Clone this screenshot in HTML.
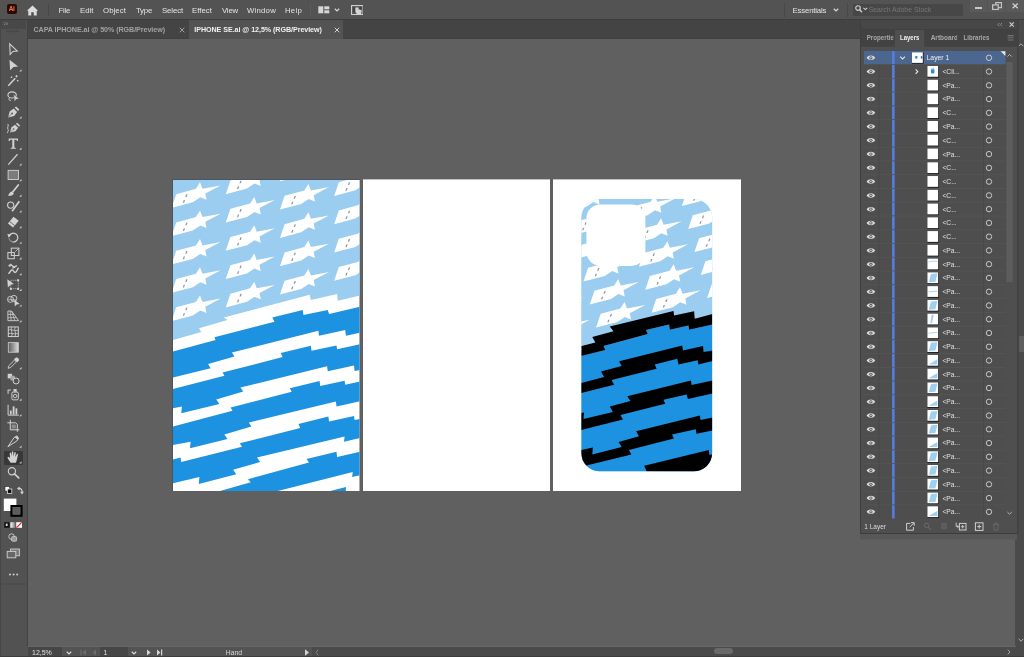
<!DOCTYPE html>
<html><head><meta charset="utf-8">
<style>
*{box-sizing:border-box;margin:0;padding:0}
html,body{width:1024px;height:657px;overflow:hidden;background:#606060;font-family:"Liberation Sans",sans-serif;}
body{position:relative}
.abs{position:absolute}
#appbar{left:0;top:0;width:1024px;height:20px;background:#535353;border-bottom:1px solid #3d3d3d}
#tabbar{left:27px;top:20px;width:989px;height:19px;background:#444444;border-bottom:1px solid #3f3f3f}
#toolbar{left:0;top:20px;width:27.6px;height:636px;background:#525252;border-right:1.6px solid #424242}
#tbhead{left:0;top:20px;width:26px;height:9px;background:#484848}
#canvas{left:27px;top:39px;width:989px;height:607px;background:#606060}
#status{left:27px;top:646px;width:285px;height:10px;background:#535353}
#hscroll{left:312px;top:646px;width:703px;height:10px;background:#4a4a4a}
#gutter{left:1015px;top:20px;width:9px;height:637px;background:#4a4a4a}
#bottomline{left:0;top:656px;width:1024px;height:1px;background:#3c3c3c}
.art{position:absolute;left:0;top:0}
.menu{position:absolute;top:5.5px;font-size:7.8px;color:#e4e4e4;line-height:10px;white-space:nowrap}
.t{position:absolute;white-space:nowrap}
</style></head><body>
<div id="wrap" style="position:absolute;left:0;top:0;width:1024px;height:657px;will-change:transform">
<div class="abs" id="canvas"></div>
<svg class="art" width="1024" height="657" viewBox="0 0 1024 657">
<rect x="172" y="179" width="187.5" height="312" fill="#4b5560"/>
<rect x="173" y="180" width="186.5" height="311" fill="#fff"/>
<rect x="363" y="179.4" width="187" height="311.6" fill="#fff"/>
<rect x="553" y="179.4" width="188" height="311.6" fill="#fff"/>
<clipPath id="c1"><polygon points="173.00,180.00 360.00,180.00 360.00,295.50 337.75,300.75 337.10,293.90 310.90,300.10 309.60,294.75 223.75,317.60 227.50,320.10 199.00,328.25 201.25,332.00 173.00,340.10"/></clipPath><clipPath id="ca"><rect x="173" y="180" width="186.5" height="311"/></clipPath><g clip-path="url(#ca)"><polygon fill="#9acdef" points="173.00,180.00 360.00,180.00 360.00,295.50 337.75,300.75 337.10,293.90 310.90,300.10 309.60,294.75 223.75,317.60 227.50,320.10 199.00,328.25 201.25,332.00 173.00,340.10"/>
<g clip-path="url(#ca)"><polygon fill="#fff" points="117.35,164.20 122.00,150.45 141.70,145.10 145.80,138.60 148.30,145.10 166.40,141.70 151.10,149.80 152.35,156.10 146.10,153.60 138.60,158.60"/><polygon fill="#fff" points="117.35,192.50 122.00,178.75 141.70,173.40 145.80,166.90 148.30,173.40 166.40,170.00 151.10,178.10 152.35,184.40 146.10,181.90 138.60,186.90"/><polygon fill="#fff" points="117.35,220.80 122.00,207.05 141.70,201.70 145.80,195.20 148.30,201.70 166.40,198.30 151.10,206.40 152.35,212.70 146.10,210.20 138.60,215.20"/><polygon fill="#fff" points="117.35,249.10 122.00,235.35 141.70,230.00 145.80,223.50 148.30,230.00 166.40,226.60 151.10,234.70 152.35,241.00 146.10,238.50 138.60,243.50"/><polygon fill="#fff" points="117.35,277.40 122.00,263.65 141.70,258.30 145.80,251.80 148.30,258.30 166.40,254.90 151.10,263.00 152.35,269.30 146.10,266.80 138.60,271.80"/><polygon fill="#fff" points="117.35,305.70 122.00,291.95 141.70,286.60 145.80,280.10 148.30,286.60 166.40,283.20 151.10,291.30 152.35,297.60 146.10,295.10 138.60,300.10"/><polygon fill="#fff" points="171.55,151.30 176.20,137.55 195.90,132.20 200.00,125.70 202.50,132.20 220.60,128.80 205.30,136.90 206.55,143.20 200.30,140.70 192.80,145.70"/><polygon fill="#fff" points="171.55,179.60 176.20,165.85 195.90,160.50 200.00,154.00 202.50,160.50 220.60,157.10 205.30,165.20 206.55,171.50 200.30,169.00 192.80,174.00"/><polygon fill="#fff" points="171.55,207.90 176.20,194.15 195.90,188.80 200.00,182.30 202.50,188.80 220.60,185.40 205.30,193.50 206.55,199.80 200.30,197.30 192.80,202.30"/><polygon fill="#fff" points="171.55,236.20 176.20,222.45 195.90,217.10 200.00,210.60 202.50,217.10 220.60,213.70 205.30,221.80 206.55,228.10 200.30,225.60 192.80,230.60"/><polygon fill="#fff" points="171.55,264.50 176.20,250.75 195.90,245.40 200.00,238.90 202.50,245.40 220.60,242.00 205.30,250.10 206.55,256.40 200.30,253.90 192.80,258.90"/><polygon fill="#fff" points="171.55,292.80 176.20,279.05 195.90,273.70 200.00,267.20 202.50,273.70 220.60,270.30 205.30,278.40 206.55,284.70 200.30,282.20 192.80,287.20"/><polygon fill="#fff" points="171.55,321.10 176.20,307.35 195.90,302.00 200.00,295.50 202.50,302.00 220.60,298.60 205.30,306.70 206.55,313.00 200.30,310.50 192.80,315.50"/><polygon fill="#fff" points="225.75,165.90 230.40,152.15 250.10,146.80 254.20,140.30 256.70,146.80 274.80,143.40 259.50,151.50 260.75,157.80 254.50,155.30 247.00,160.30"/><polygon fill="#fff" points="225.75,194.20 230.40,180.45 250.10,175.10 254.20,168.60 256.70,175.10 274.80,171.70 259.50,179.80 260.75,186.10 254.50,183.60 247.00,188.60"/><polygon fill="#fff" points="225.75,222.50 230.40,208.75 250.10,203.40 254.20,196.90 256.70,203.40 274.80,200.00 259.50,208.10 260.75,214.40 254.50,211.90 247.00,216.90"/><polygon fill="#fff" points="225.75,250.80 230.40,237.05 250.10,231.70 254.20,225.20 256.70,231.70 274.80,228.30 259.50,236.40 260.75,242.70 254.50,240.20 247.00,245.20"/><polygon fill="#fff" points="225.75,279.10 230.40,265.35 250.10,260.00 254.20,253.50 256.70,260.00 274.80,256.60 259.50,264.70 260.75,271.00 254.50,268.50 247.00,273.50"/><polygon fill="#fff" points="225.75,307.40 230.40,293.65 250.10,288.30 254.20,281.80 256.70,288.30 274.80,284.90 259.50,293.00 260.75,299.30 254.50,296.80 247.00,301.80"/><polygon fill="#fff" points="279.95,153.00 284.60,139.25 304.30,133.90 308.40,127.40 310.90,133.90 329.00,130.50 313.70,138.60 314.95,144.90 308.70,142.40 301.20,147.40"/><polygon fill="#fff" points="279.95,181.30 284.60,167.55 304.30,162.20 308.40,155.70 310.90,162.20 329.00,158.80 313.70,166.90 314.95,173.20 308.70,170.70 301.20,175.70"/><polygon fill="#fff" points="279.95,209.60 284.60,195.85 304.30,190.50 308.40,184.00 310.90,190.50 329.00,187.10 313.70,195.20 314.95,201.50 308.70,199.00 301.20,204.00"/><polygon fill="#fff" points="279.95,237.90 284.60,224.15 304.30,218.80 308.40,212.30 310.90,218.80 329.00,215.40 313.70,223.50 314.95,229.80 308.70,227.30 301.20,232.30"/><polygon fill="#fff" points="279.95,266.20 284.60,252.45 304.30,247.10 308.40,240.60 310.90,247.10 329.00,243.70 313.70,251.80 314.95,258.10 308.70,255.60 301.20,260.60"/><polygon fill="#fff" points="279.95,294.50 284.60,280.75 304.30,275.40 308.40,268.90 310.90,275.40 329.00,272.00 313.70,280.10 314.95,286.40 308.70,283.90 301.20,288.90"/><polygon fill="#fff" points="279.95,322.80 284.60,309.05 304.30,303.70 308.40,297.20 310.90,303.70 329.00,300.30 313.70,308.40 314.95,314.70 308.70,312.20 301.20,317.20"/><polygon fill="#fff" points="334.15,167.60 338.80,153.85 358.50,148.50 362.60,142.00 365.10,148.50 383.20,145.10 367.90,153.20 369.15,159.50 362.90,157.00 355.40,162.00"/><polygon fill="#fff" points="334.15,195.90 338.80,182.15 358.50,176.80 362.60,170.30 365.10,176.80 383.20,173.40 367.90,181.50 369.15,187.80 362.90,185.30 355.40,190.30"/><polygon fill="#fff" points="334.15,224.20 338.80,210.45 358.50,205.10 362.60,198.60 365.10,205.10 383.20,201.70 367.90,209.80 369.15,216.10 362.90,213.60 355.40,218.60"/><polygon fill="#fff" points="334.15,252.50 338.80,238.75 358.50,233.40 362.60,226.90 365.10,233.40 383.20,230.00 367.90,238.10 369.15,244.40 362.90,241.90 355.40,246.90"/><polygon fill="#fff" points="334.15,280.80 338.80,267.05 358.50,261.70 362.60,255.20 365.10,261.70 383.20,258.30 367.90,266.40 369.15,272.70 362.90,270.20 355.40,275.20"/></g>
<g clip-path="url(#c1)"><polygon fill="#9093a6" points="131.10,153.35 132.00,150.65 133.30,150.65 132.40,153.35"/><polygon fill="#9093a6" points="128.60,158.95 129.50,156.25 130.80,156.25 129.90,158.95"/><polygon fill="#9093a6" points="131.10,181.65 132.00,178.95 133.30,178.95 132.40,181.65"/><polygon fill="#9093a6" points="128.60,187.25 129.50,184.55 130.80,184.55 129.90,187.25"/><polygon fill="#9093a6" points="131.10,209.95 132.00,207.25 133.30,207.25 132.40,209.95"/><polygon fill="#9093a6" points="128.60,215.55 129.50,212.85 130.80,212.85 129.90,215.55"/><polygon fill="#9093a6" points="131.10,238.25 132.00,235.55 133.30,235.55 132.40,238.25"/><polygon fill="#9093a6" points="128.60,243.85 129.50,241.15 130.80,241.15 129.90,243.85"/><polygon fill="#9093a6" points="131.10,266.55 132.00,263.85 133.30,263.85 132.40,266.55"/><polygon fill="#9093a6" points="128.60,272.15 129.50,269.45 130.80,269.45 129.90,272.15"/><polygon fill="#9093a6" points="131.10,294.85 132.00,292.15 133.30,292.15 132.40,294.85"/><polygon fill="#9093a6" points="128.60,300.45 129.50,297.75 130.80,297.75 129.90,300.45"/><polygon fill="#9093a6" points="185.30,140.45 186.20,137.75 187.50,137.75 186.60,140.45"/><polygon fill="#9093a6" points="182.80,146.05 183.70,143.35 185.00,143.35 184.10,146.05"/><polygon fill="#9093a6" points="185.30,168.75 186.20,166.05 187.50,166.05 186.60,168.75"/><polygon fill="#9093a6" points="182.80,174.35 183.70,171.65 185.00,171.65 184.10,174.35"/><polygon fill="#9093a6" points="185.30,197.05 186.20,194.35 187.50,194.35 186.60,197.05"/><polygon fill="#9093a6" points="182.80,202.65 183.70,199.95 185.00,199.95 184.10,202.65"/><polygon fill="#9093a6" points="185.30,225.35 186.20,222.65 187.50,222.65 186.60,225.35"/><polygon fill="#9093a6" points="182.80,230.95 183.70,228.25 185.00,228.25 184.10,230.95"/><polygon fill="#9093a6" points="185.30,253.65 186.20,250.95 187.50,250.95 186.60,253.65"/><polygon fill="#9093a6" points="182.80,259.25 183.70,256.55 185.00,256.55 184.10,259.25"/><polygon fill="#9093a6" points="185.30,281.95 186.20,279.25 187.50,279.25 186.60,281.95"/><polygon fill="#9093a6" points="182.80,287.55 183.70,284.85 185.00,284.85 184.10,287.55"/><polygon fill="#9093a6" points="185.30,310.25 186.20,307.55 187.50,307.55 186.60,310.25"/><polygon fill="#9093a6" points="182.80,315.85 183.70,313.15 185.00,313.15 184.10,315.85"/><polygon fill="#9093a6" points="239.50,155.05 240.40,152.35 241.70,152.35 240.80,155.05"/><polygon fill="#9093a6" points="237.00,160.65 237.90,157.95 239.20,157.95 238.30,160.65"/><polygon fill="#9093a6" points="239.50,183.35 240.40,180.65 241.70,180.65 240.80,183.35"/><polygon fill="#9093a6" points="237.00,188.95 237.90,186.25 239.20,186.25 238.30,188.95"/><polygon fill="#9093a6" points="239.50,211.65 240.40,208.95 241.70,208.95 240.80,211.65"/><polygon fill="#9093a6" points="237.00,217.25 237.90,214.55 239.20,214.55 238.30,217.25"/><polygon fill="#9093a6" points="239.50,239.95 240.40,237.25 241.70,237.25 240.80,239.95"/><polygon fill="#9093a6" points="237.00,245.55 237.90,242.85 239.20,242.85 238.30,245.55"/><polygon fill="#9093a6" points="239.50,268.25 240.40,265.55 241.70,265.55 240.80,268.25"/><polygon fill="#9093a6" points="237.00,273.85 237.90,271.15 239.20,271.15 238.30,273.85"/><polygon fill="#9093a6" points="239.50,296.55 240.40,293.85 241.70,293.85 240.80,296.55"/><polygon fill="#9093a6" points="237.00,302.15 237.90,299.45 239.20,299.45 238.30,302.15"/><polygon fill="#9093a6" points="293.70,142.15 294.60,139.45 295.90,139.45 295.00,142.15"/><polygon fill="#9093a6" points="291.20,147.75 292.10,145.05 293.40,145.05 292.50,147.75"/><polygon fill="#9093a6" points="293.70,170.45 294.60,167.75 295.90,167.75 295.00,170.45"/><polygon fill="#9093a6" points="291.20,176.05 292.10,173.35 293.40,173.35 292.50,176.05"/><polygon fill="#9093a6" points="293.70,198.75 294.60,196.05 295.90,196.05 295.00,198.75"/><polygon fill="#9093a6" points="291.20,204.35 292.10,201.65 293.40,201.65 292.50,204.35"/><polygon fill="#9093a6" points="293.70,227.05 294.60,224.35 295.90,224.35 295.00,227.05"/><polygon fill="#9093a6" points="291.20,232.65 292.10,229.95 293.40,229.95 292.50,232.65"/><polygon fill="#9093a6" points="293.70,255.35 294.60,252.65 295.90,252.65 295.00,255.35"/><polygon fill="#9093a6" points="291.20,260.95 292.10,258.25 293.40,258.25 292.50,260.95"/><polygon fill="#9093a6" points="293.70,283.65 294.60,280.95 295.90,280.95 295.00,283.65"/><polygon fill="#9093a6" points="291.20,289.25 292.10,286.55 293.40,286.55 292.50,289.25"/><polygon fill="#9093a6" points="293.70,311.95 294.60,309.25 295.90,309.25 295.00,311.95"/><polygon fill="#9093a6" points="291.20,317.55 292.10,314.85 293.40,314.85 292.50,317.55"/><polygon fill="#9093a6" points="347.90,156.75 348.80,154.05 350.10,154.05 349.20,156.75"/><polygon fill="#9093a6" points="345.40,162.35 346.30,159.65 347.60,159.65 346.70,162.35"/><polygon fill="#9093a6" points="347.90,185.05 348.80,182.35 350.10,182.35 349.20,185.05"/><polygon fill="#9093a6" points="345.40,190.65 346.30,187.95 347.60,187.95 346.70,190.65"/><polygon fill="#9093a6" points="347.90,213.35 348.80,210.65 350.10,210.65 349.20,213.35"/><polygon fill="#9093a6" points="345.40,218.95 346.30,216.25 347.60,216.25 346.70,218.95"/><polygon fill="#9093a6" points="347.90,241.65 348.80,238.95 350.10,238.95 349.20,241.65"/><polygon fill="#9093a6" points="345.40,247.25 346.30,244.55 347.60,244.55 346.70,247.25"/><polygon fill="#9093a6" points="347.90,269.95 348.80,267.25 350.10,267.25 349.20,269.95"/><polygon fill="#9093a6" points="345.40,275.55 346.30,272.85 347.60,272.85 346.70,275.55"/></g>
<polygon fill="#1d92e1" points="173.00,351.40 215.60,340.10 214.40,337.25 274.50,321.70 272.30,317.60 302.75,310.10 303.40,315.10 327.75,310.10 329.00,313.90 360.00,306.80 360.00,332.80 345.90,335.75 345.25,330.10 319.00,335.75 318.40,330.75 231.90,352.60 234.40,356.40 208.10,363.90 210.60,368.25 173.00,377.60"/>
<polygon fill="#1d92e1" points="173.00,388.90 224.40,375.75 222.50,372.60 282.60,357.00 280.75,353.00 310.90,345.75 311.50,350.75 336.50,345.50 337.10,349.25 360.00,344.30 360.00,370.00 354.60,371.00 354.00,365.40 327.75,371.20 327.10,366.20 240.40,387.60 243.25,391.40 216.25,399.50 219.40,403.90 181.25,413.25 181.90,406.40 173.00,408.25"/>
<polygon fill="#1d92e1" points="173.00,426.40 232.50,410.75 230.60,407.60 291.70,391.70 289.80,388.25 319.60,381.00 320.25,386.00 344.60,380.75 345.25,384.75 360.00,381.50 360.00,401.20 336.50,406.40 335.90,401.40 248.80,422.60 251.40,426.60 224.40,434.50 227.50,438.90 190.00,448.25 190.60,441.75 173.00,445.10"/>
<polygon fill="#1d92e1" points="173.00,459.50 180.60,457.60 181.25,462.00 242.00,446.80 239.80,443.25 300.25,428.00 298.40,423.90 328.40,416.40 329.00,421.40 354.00,415.90 354.60,420.10 360.00,419.00 360.00,438.00 344.00,441.75 344.60,436.40 257.00,457.60 260.10,462.00 233.10,469.75 236.25,474.25 198.75,483.90 199.40,477.00 173.00,483.25"/>
<polygon fill="#1d92e1" points="220.00,491.00 250.75,482.30 248.00,479.20 309.00,462.60 306.50,458.90 336.50,451.75 337.10,457.00 360.00,451.80 360.00,475.30 360.00,475.30 352.10,477.00 352.75,472.00 277.75,491.00"/>
<polygon fill="#1d92e1" points="330.25,491.00 345.90,487.00 345.90,491.00"/></g>
<clipPath id="cp"><rect x="581.3" y="199" width="130.9" height="272.3" rx="18.5" ry="18.5"/></clipPath>
<g clip-path="url(#cp)">
<rect x="580" y="198" width="134" height="275" fill="#9acdef"/>
<polygon fill="#fff" points="440.95,196.10 445.60,182.35 465.30,177.00 469.40,170.50 471.90,177.00 490.00,173.60 474.70,181.70 475.95,188.00 469.70,185.50 462.20,190.50"/><polygon fill="#9093a6" points="454.70,185.25 455.60,182.55 456.90,182.55 456.00,185.25"/><polygon fill="#9093a6" points="452.20,190.85 453.10,188.15 454.40,188.15 453.50,190.85"/><polygon fill="#fff" points="447.25,219.10 451.90,205.35 471.60,200.00 475.70,193.50 478.20,200.00 496.30,196.60 481.00,204.70 482.25,211.00 476.00,208.50 468.50,213.50"/><polygon fill="#9093a6" points="461.00,208.25 461.90,205.55 463.20,205.55 462.30,208.25"/><polygon fill="#9093a6" points="458.50,213.85 459.40,211.15 460.70,211.15 459.80,213.85"/><polygon fill="#fff" points="453.55,242.10 458.20,228.35 477.90,223.00 482.00,216.50 484.50,223.00 502.60,219.60 487.30,227.70 488.55,234.00 482.30,231.50 474.80,236.50"/><polygon fill="#9093a6" points="467.30,231.25 468.20,228.55 469.50,228.55 468.60,231.25"/><polygon fill="#9093a6" points="464.80,236.85 465.70,234.15 467.00,234.15 466.10,236.85"/><polygon fill="#fff" points="459.85,265.10 464.50,251.35 484.20,246.00 488.30,239.50 490.80,246.00 508.90,242.60 493.60,250.70 494.85,257.00 488.60,254.50 481.10,259.50"/><polygon fill="#9093a6" points="473.60,254.25 474.50,251.55 475.80,251.55 474.90,254.25"/><polygon fill="#9093a6" points="471.10,259.85 472.00,257.15 473.30,257.15 472.40,259.85"/><polygon fill="#fff" points="466.15,288.10 470.80,274.35 490.50,269.00 494.60,262.50 497.10,269.00 515.20,265.60 499.90,273.70 501.15,280.00 494.90,277.50 487.40,282.50"/><polygon fill="#9093a6" points="479.90,277.25 480.80,274.55 482.10,274.55 481.20,277.25"/><polygon fill="#9093a6" points="477.40,282.85 478.30,280.15 479.60,280.15 478.70,282.85"/><polygon fill="#fff" points="472.45,311.10 477.10,297.35 496.80,292.00 500.90,285.50 503.40,292.00 521.50,288.60 506.20,296.70 507.45,303.00 501.20,300.50 493.70,305.50"/><polygon fill="#9093a6" points="486.20,300.25 487.10,297.55 488.40,297.55 487.50,300.25"/><polygon fill="#9093a6" points="483.70,305.85 484.60,303.15 485.90,303.15 485.00,305.85"/><polygon fill="#fff" points="478.75,334.10 483.40,320.35 503.10,315.00 507.20,308.50 509.70,315.00 527.80,311.60 512.50,319.70 513.75,326.00 507.50,323.50 500.00,328.50"/><polygon fill="#9093a6" points="492.50,323.25 493.40,320.55 494.70,320.55 493.80,323.25"/><polygon fill="#9093a6" points="490.00,328.85 490.90,326.15 492.20,326.15 491.30,328.85"/><polygon fill="#fff" points="485.05,357.10 489.70,343.35 509.40,338.00 513.50,331.50 516.00,338.00 534.10,334.60 518.80,342.70 520.05,349.00 513.80,346.50 506.30,351.50"/><polygon fill="#9093a6" points="498.80,346.25 499.70,343.55 501.00,343.55 500.10,346.25"/><polygon fill="#9093a6" points="496.30,351.85 497.20,349.15 498.50,349.15 497.60,351.85"/><polygon fill="#fff" points="491.35,380.10 496.00,366.35 515.70,361.00 519.80,354.50 522.30,361.00 540.40,357.60 525.10,365.70 526.35,372.00 520.10,369.50 512.60,374.50"/><polygon fill="#9093a6" points="505.10,369.25 506.00,366.55 507.30,366.55 506.40,369.25"/><polygon fill="#9093a6" points="502.60,374.85 503.50,372.15 504.80,372.15 503.90,374.85"/><polygon fill="#fff" points="497.65,403.10 502.30,389.35 522.00,384.00 526.10,377.50 528.60,384.00 546.70,380.60 531.40,388.70 532.65,395.00 526.40,392.50 518.90,397.50"/><polygon fill="#9093a6" points="511.40,392.25 512.30,389.55 513.60,389.55 512.70,392.25"/><polygon fill="#9093a6" points="508.90,397.85 509.80,395.15 511.10,395.15 510.20,397.85"/><polygon fill="#fff" points="503.95,426.10 508.60,412.35 528.30,407.00 532.40,400.50 534.90,407.00 553.00,403.60 537.70,411.70 538.95,418.00 532.70,415.50 525.20,420.50"/><polygon fill="#9093a6" points="517.70,415.25 518.60,412.55 519.90,412.55 519.00,415.25"/><polygon fill="#9093a6" points="515.20,420.85 516.10,418.15 517.40,418.15 516.50,420.85"/><polygon fill="#fff" points="510.25,449.10 514.90,435.35 534.60,430.00 538.70,423.50 541.20,430.00 559.30,426.60 544.00,434.70 545.25,441.00 539.00,438.50 531.50,443.50"/><polygon fill="#9093a6" points="524.00,438.25 524.90,435.55 526.20,435.55 525.30,438.25"/><polygon fill="#9093a6" points="521.50,443.85 522.40,441.15 523.70,441.15 522.80,443.85"/><polygon fill="#fff" points="496.45,181.35 501.10,167.60 520.80,162.25 524.90,155.75 527.40,162.25 545.50,158.85 530.20,166.95 531.45,173.25 525.20,170.75 517.70,175.75"/><polygon fill="#9093a6" points="510.20,170.50 511.10,167.80 512.40,167.80 511.50,170.50"/><polygon fill="#9093a6" points="507.70,176.10 508.60,173.40 509.90,173.40 509.00,176.10"/><polygon fill="#fff" points="502.75,204.35 507.40,190.60 527.10,185.25 531.20,178.75 533.70,185.25 551.80,181.85 536.50,189.95 537.75,196.25 531.50,193.75 524.00,198.75"/><polygon fill="#9093a6" points="516.50,193.50 517.40,190.80 518.70,190.80 517.80,193.50"/><polygon fill="#9093a6" points="514.00,199.10 514.90,196.40 516.20,196.40 515.30,199.10"/><polygon fill="#fff" points="509.05,227.35 513.70,213.60 533.40,208.25 537.50,201.75 540.00,208.25 558.10,204.85 542.80,212.95 544.05,219.25 537.80,216.75 530.30,221.75"/><polygon fill="#9093a6" points="522.80,216.50 523.70,213.80 525.00,213.80 524.10,216.50"/><polygon fill="#9093a6" points="520.30,222.10 521.20,219.40 522.50,219.40 521.60,222.10"/><polygon fill="#fff" points="515.35,250.35 520.00,236.60 539.70,231.25 543.80,224.75 546.30,231.25 564.40,227.85 549.10,235.95 550.35,242.25 544.10,239.75 536.60,244.75"/><polygon fill="#9093a6" points="529.10,239.50 530.00,236.80 531.30,236.80 530.40,239.50"/><polygon fill="#9093a6" points="526.60,245.10 527.50,242.40 528.80,242.40 527.90,245.10"/><polygon fill="#fff" points="521.65,273.35 526.30,259.60 546.00,254.25 550.10,247.75 552.60,254.25 570.70,250.85 555.40,258.95 556.65,265.25 550.40,262.75 542.90,267.75"/><polygon fill="#9093a6" points="535.40,262.50 536.30,259.80 537.60,259.80 536.70,262.50"/><polygon fill="#9093a6" points="532.90,268.10 533.80,265.40 535.10,265.40 534.20,268.10"/><polygon fill="#fff" points="527.95,296.35 532.60,282.60 552.30,277.25 556.40,270.75 558.90,277.25 577.00,273.85 561.70,281.95 562.95,288.25 556.70,285.75 549.20,290.75"/><polygon fill="#9093a6" points="541.70,285.50 542.60,282.80 543.90,282.80 543.00,285.50"/><polygon fill="#9093a6" points="539.20,291.10 540.10,288.40 541.40,288.40 540.50,291.10"/><polygon fill="#fff" points="534.25,319.35 538.90,305.60 558.60,300.25 562.70,293.75 565.20,300.25 583.30,296.85 568.00,304.95 569.25,311.25 563.00,308.75 555.50,313.75"/><polygon fill="#9093a6" points="548.00,308.50 548.90,305.80 550.20,305.80 549.30,308.50"/><polygon fill="#9093a6" points="545.50,314.10 546.40,311.40 547.70,311.40 546.80,314.10"/><polygon fill="#fff" points="540.55,342.35 545.20,328.60 564.90,323.25 569.00,316.75 571.50,323.25 589.60,319.85 574.30,327.95 575.55,334.25 569.30,331.75 561.80,336.75"/><polygon fill="#9093a6" points="554.30,331.50 555.20,328.80 556.50,328.80 555.60,331.50"/><polygon fill="#9093a6" points="551.80,337.10 552.70,334.40 554.00,334.40 553.10,337.10"/><polygon fill="#fff" points="546.85,365.35 551.50,351.60 571.20,346.25 575.30,339.75 577.80,346.25 595.90,342.85 580.60,350.95 581.85,357.25 575.60,354.75 568.10,359.75"/><polygon fill="#9093a6" points="560.60,354.50 561.50,351.80 562.80,351.80 561.90,354.50"/><polygon fill="#9093a6" points="558.10,360.10 559.00,357.40 560.30,357.40 559.40,360.10"/><polygon fill="#fff" points="551.95,166.60 556.60,152.85 576.30,147.50 580.40,141.00 582.90,147.50 601.00,144.10 585.70,152.20 586.95,158.50 580.70,156.00 573.20,161.00"/><polygon fill="#9093a6" points="565.70,155.75 566.60,153.05 567.90,153.05 567.00,155.75"/><polygon fill="#9093a6" points="563.20,161.35 564.10,158.65 565.40,158.65 564.50,161.35"/><polygon fill="#fff" points="558.25,189.60 562.90,175.85 582.60,170.50 586.70,164.00 589.20,170.50 607.30,167.10 592.00,175.20 593.25,181.50 587.00,179.00 579.50,184.00"/><polygon fill="#9093a6" points="572.00,178.75 572.90,176.05 574.20,176.05 573.30,178.75"/><polygon fill="#9093a6" points="569.50,184.35 570.40,181.65 571.70,181.65 570.80,184.35"/><polygon fill="#fff" points="564.55,212.60 569.20,198.85 588.90,193.50 593.00,187.00 595.50,193.50 613.60,190.10 598.30,198.20 599.55,204.50 593.30,202.00 585.80,207.00"/><polygon fill="#9093a6" points="578.30,201.75 579.20,199.05 580.50,199.05 579.60,201.75"/><polygon fill="#9093a6" points="575.80,207.35 576.70,204.65 578.00,204.65 577.10,207.35"/><polygon fill="#fff" points="570.85,235.60 575.50,221.85 595.20,216.50 599.30,210.00 601.80,216.50 619.90,213.10 604.60,221.20 605.85,227.50 599.60,225.00 592.10,230.00"/><polygon fill="#9093a6" points="584.60,224.75 585.50,222.05 586.80,222.05 585.90,224.75"/><polygon fill="#9093a6" points="582.10,230.35 583.00,227.65 584.30,227.65 583.40,230.35"/><polygon fill="#fff" points="577.15,258.60 581.80,244.85 601.50,239.50 605.60,233.00 608.10,239.50 626.20,236.10 610.90,244.20 612.15,250.50 605.90,248.00 598.40,253.00"/><polygon fill="#9093a6" points="590.90,247.75 591.80,245.05 593.10,245.05 592.20,247.75"/><polygon fill="#9093a6" points="588.40,253.35 589.30,250.65 590.60,250.65 589.70,253.35"/><polygon fill="#fff" points="583.45,281.60 588.10,267.85 607.80,262.50 611.90,256.00 614.40,262.50 632.50,259.10 617.20,267.20 618.45,273.50 612.20,271.00 604.70,276.00"/><polygon fill="#9093a6" points="597.20,270.75 598.10,268.05 599.40,268.05 598.50,270.75"/><polygon fill="#9093a6" points="594.70,276.35 595.60,273.65 596.90,273.65 596.00,276.35"/><polygon fill="#fff" points="589.75,304.60 594.40,290.85 614.10,285.50 618.20,279.00 620.70,285.50 638.80,282.10 623.50,290.20 624.75,296.50 618.50,294.00 611.00,299.00"/><polygon fill="#9093a6" points="603.50,293.75 604.40,291.05 605.70,291.05 604.80,293.75"/><polygon fill="#9093a6" points="601.00,299.35 601.90,296.65 603.20,296.65 602.30,299.35"/><polygon fill="#fff" points="596.05,327.60 600.70,313.85 620.40,308.50 624.50,302.00 627.00,308.50 645.10,305.10 629.80,313.20 631.05,319.50 624.80,317.00 617.30,322.00"/><polygon fill="#9093a6" points="609.80,316.75 610.70,314.05 612.00,314.05 611.10,316.75"/><polygon fill="#9093a6" points="607.30,322.35 608.20,319.65 609.50,319.65 608.60,322.35"/><polygon fill="#fff" points="607.45,151.85 612.10,138.10 631.80,132.75 635.90,126.25 638.40,132.75 656.50,129.35 641.20,137.45 642.45,143.75 636.20,141.25 628.70,146.25"/><polygon fill="#9093a6" points="621.20,141.00 622.10,138.30 623.40,138.30 622.50,141.00"/><polygon fill="#9093a6" points="618.70,146.60 619.60,143.90 620.90,143.90 620.00,146.60"/><polygon fill="#fff" points="613.75,174.85 618.40,161.10 638.10,155.75 642.20,149.25 644.70,155.75 662.80,152.35 647.50,160.45 648.75,166.75 642.50,164.25 635.00,169.25"/><polygon fill="#9093a6" points="627.50,164.00 628.40,161.30 629.70,161.30 628.80,164.00"/><polygon fill="#9093a6" points="625.00,169.60 625.90,166.90 627.20,166.90 626.30,169.60"/><polygon fill="#fff" points="620.05,197.85 624.70,184.10 644.40,178.75 648.50,172.25 651.00,178.75 669.10,175.35 653.80,183.45 655.05,189.75 648.80,187.25 641.30,192.25"/><polygon fill="#9093a6" points="633.80,187.00 634.70,184.30 636.00,184.30 635.10,187.00"/><polygon fill="#9093a6" points="631.30,192.60 632.20,189.90 633.50,189.90 632.60,192.60"/><polygon fill="#fff" points="626.35,220.85 631.00,207.10 650.70,201.75 654.80,195.25 657.30,201.75 675.40,198.35 660.10,206.45 661.35,212.75 655.10,210.25 647.60,215.25"/><polygon fill="#9093a6" points="640.10,210.00 641.00,207.30 642.30,207.30 641.40,210.00"/><polygon fill="#9093a6" points="637.60,215.60 638.50,212.90 639.80,212.90 638.90,215.60"/><polygon fill="#fff" points="632.65,243.85 637.30,230.10 657.00,224.75 661.10,218.25 663.60,224.75 681.70,221.35 666.40,229.45 667.65,235.75 661.40,233.25 653.90,238.25"/><polygon fill="#9093a6" points="646.40,233.00 647.30,230.30 648.60,230.30 647.70,233.00"/><polygon fill="#9093a6" points="643.90,238.60 644.80,235.90 646.10,235.90 645.20,238.60"/><polygon fill="#fff" points="638.95,266.85 643.60,253.10 663.30,247.75 667.40,241.25 669.90,247.75 688.00,244.35 672.70,252.45 673.95,258.75 667.70,256.25 660.20,261.25"/><polygon fill="#9093a6" points="652.70,256.00 653.60,253.30 654.90,253.30 654.00,256.00"/><polygon fill="#9093a6" points="650.20,261.60 651.10,258.90 652.40,258.90 651.50,261.60"/><polygon fill="#fff" points="645.25,289.85 649.90,276.10 669.60,270.75 673.70,264.25 676.20,270.75 694.30,267.35 679.00,275.45 680.25,281.75 674.00,279.25 666.50,284.25"/><polygon fill="#9093a6" points="659.00,279.00 659.90,276.30 661.20,276.30 660.30,279.00"/><polygon fill="#9093a6" points="656.50,284.60 657.40,281.90 658.70,281.90 657.80,284.60"/><polygon fill="#fff" points="651.55,312.85 656.20,299.10 675.90,293.75 680.00,287.25 682.50,293.75 700.60,290.35 685.30,298.45 686.55,304.75 680.30,302.25 672.80,307.25"/><polygon fill="#9093a6" points="665.30,302.00 666.20,299.30 667.50,299.30 666.60,302.00"/><polygon fill="#9093a6" points="662.80,307.60 663.70,304.90 665.00,304.90 664.10,307.60"/><polygon fill="#fff" points="662.95,137.10 667.60,123.35 687.30,118.00 691.40,111.50 693.90,118.00 712.00,114.60 696.70,122.70 697.95,129.00 691.70,126.50 684.20,131.50"/><polygon fill="#9093a6" points="676.70,126.25 677.60,123.55 678.90,123.55 678.00,126.25"/><polygon fill="#9093a6" points="674.20,131.85 675.10,129.15 676.40,129.15 675.50,131.85"/><polygon fill="#fff" points="669.25,160.10 673.90,146.35 693.60,141.00 697.70,134.50 700.20,141.00 718.30,137.60 703.00,145.70 704.25,152.00 698.00,149.50 690.50,154.50"/><polygon fill="#9093a6" points="683.00,149.25 683.90,146.55 685.20,146.55 684.30,149.25"/><polygon fill="#9093a6" points="680.50,154.85 681.40,152.15 682.70,152.15 681.80,154.85"/><polygon fill="#fff" points="675.55,183.10 680.20,169.35 699.90,164.00 704.00,157.50 706.50,164.00 724.60,160.60 709.30,168.70 710.55,175.00 704.30,172.50 696.80,177.50"/><polygon fill="#9093a6" points="689.30,172.25 690.20,169.55 691.50,169.55 690.60,172.25"/><polygon fill="#9093a6" points="686.80,177.85 687.70,175.15 689.00,175.15 688.10,177.85"/><polygon fill="#fff" points="681.85,206.10 686.50,192.35 706.20,187.00 710.30,180.50 712.80,187.00 730.90,183.60 715.60,191.70 716.85,198.00 710.60,195.50 703.10,200.50"/><polygon fill="#9093a6" points="695.60,195.25 696.50,192.55 697.80,192.55 696.90,195.25"/><polygon fill="#9093a6" points="693.10,200.85 694.00,198.15 695.30,198.15 694.40,200.85"/><polygon fill="#fff" points="688.15,229.10 692.80,215.35 712.50,210.00 716.60,203.50 719.10,210.00 737.20,206.60 721.90,214.70 723.15,221.00 716.90,218.50 709.40,223.50"/><polygon fill="#9093a6" points="701.90,218.25 702.80,215.55 704.10,215.55 703.20,218.25"/><polygon fill="#9093a6" points="699.40,223.85 700.30,221.15 701.60,221.15 700.70,223.85"/><polygon fill="#fff" points="694.45,252.10 699.10,238.35 718.80,233.00 722.90,226.50 725.40,233.00 743.50,229.60 728.20,237.70 729.45,244.00 723.20,241.50 715.70,246.50"/><polygon fill="#9093a6" points="708.20,241.25 709.10,238.55 710.40,238.55 709.50,241.25"/><polygon fill="#9093a6" points="705.70,246.85 706.60,244.15 707.90,244.15 707.00,246.85"/><polygon fill="#fff" points="700.75,275.10 705.40,261.35 725.10,256.00 729.20,249.50 731.70,256.00 749.80,252.60 734.50,260.70 735.75,267.00 729.50,264.50 722.00,269.50"/><polygon fill="#9093a6" points="714.50,264.25 715.40,261.55 716.70,261.55 715.80,264.25"/><polygon fill="#9093a6" points="712.00,269.85 712.90,267.15 714.20,267.15 713.30,269.85"/><polygon fill="#fff" points="707.05,298.10 711.70,284.35 731.40,279.00 735.50,272.50 738.00,279.00 756.10,275.60 740.80,283.70 742.05,290.00 735.80,287.50 728.30,292.50"/><polygon fill="#9093a6" points="720.80,287.25 721.70,284.55 723.00,284.55 722.10,287.25"/><polygon fill="#9093a6" points="718.30,292.85 719.20,290.15 720.50,290.15 719.60,292.85"/><polygon fill="#fff" points="713.35,321.10 718.00,307.35 737.70,302.00 741.80,295.50 744.30,302.00 762.40,298.60 747.10,306.70 748.35,313.00 742.10,310.50 734.60,315.50"/><polygon fill="#9093a6" points="727.10,310.25 728.00,307.55 729.30,307.55 728.40,310.25"/><polygon fill="#9093a6" points="724.60,315.85 725.50,313.15 726.80,313.15 725.90,315.85"/><polygon fill="#fff" points="719.65,344.10 724.30,330.35 744.00,325.00 748.10,318.50 750.60,325.00 768.70,321.60 753.40,329.70 754.65,336.00 748.40,333.50 740.90,338.50"/><polygon fill="#9093a6" points="733.40,333.25 734.30,330.55 735.60,330.55 734.70,333.25"/><polygon fill="#9093a6" points="730.90,338.85 731.80,336.15 733.10,336.15 732.20,338.85"/><polygon fill="#fff" points="725.95,367.10 730.60,353.35 750.30,348.00 754.40,341.50 756.90,348.00 775.00,344.60 759.70,352.70 760.95,359.00 754.70,356.50 747.20,361.50"/><polygon fill="#9093a6" points="739.70,356.25 740.60,353.55 741.90,353.55 741.00,356.25"/><polygon fill="#9093a6" points="737.20,361.85 738.10,359.15 739.40,359.15 738.50,361.85"/><polygon fill="#fff" points="732.25,390.10 736.90,376.35 756.60,371.00 760.70,364.50 763.20,371.00 781.30,367.60 766.00,375.70 767.25,382.00 761.00,379.50 753.50,384.50"/><polygon fill="#9093a6" points="746.00,379.25 746.90,376.55 748.20,376.55 747.30,379.25"/><polygon fill="#9093a6" points="743.50,384.85 744.40,382.15 745.70,382.15 744.80,384.85"/><polygon fill="#fff" points="718.45,122.35 723.10,108.60 742.80,103.25 746.90,96.75 749.40,103.25 767.50,99.85 752.20,107.95 753.45,114.25 747.20,111.75 739.70,116.75"/><polygon fill="#9093a6" points="732.20,111.50 733.10,108.80 734.40,108.80 733.50,111.50"/><polygon fill="#9093a6" points="729.70,117.10 730.60,114.40 731.90,114.40 731.00,117.10"/><polygon fill="#fff" points="724.75,145.35 729.40,131.60 749.10,126.25 753.20,119.75 755.70,126.25 773.80,122.85 758.50,130.95 759.75,137.25 753.50,134.75 746.00,139.75"/><polygon fill="#9093a6" points="738.50,134.50 739.40,131.80 740.70,131.80 739.80,134.50"/><polygon fill="#9093a6" points="736.00,140.10 736.90,137.40 738.20,137.40 737.30,140.10"/><polygon fill="#fff" points="731.05,168.35 735.70,154.60 755.40,149.25 759.50,142.75 762.00,149.25 780.10,145.85 764.80,153.95 766.05,160.25 759.80,157.75 752.30,162.75"/><polygon fill="#9093a6" points="744.80,157.50 745.70,154.80 747.00,154.80 746.10,157.50"/><polygon fill="#9093a6" points="742.30,163.10 743.20,160.40 744.50,160.40 743.60,163.10"/><polygon fill="#fff" points="737.35,191.35 742.00,177.60 761.70,172.25 765.80,165.75 768.30,172.25 786.40,168.85 771.10,176.95 772.35,183.25 766.10,180.75 758.60,185.75"/><polygon fill="#9093a6" points="751.10,180.50 752.00,177.80 753.30,177.80 752.40,180.50"/><polygon fill="#9093a6" points="748.60,186.10 749.50,183.40 750.80,183.40 749.90,186.10"/><polygon fill="#fff" points="743.65,214.35 748.30,200.60 768.00,195.25 772.10,188.75 774.60,195.25 792.70,191.85 777.40,199.95 778.65,206.25 772.40,203.75 764.90,208.75"/><polygon fill="#9093a6" points="757.40,203.50 758.30,200.80 759.60,200.80 758.70,203.50"/><polygon fill="#9093a6" points="754.90,209.10 755.80,206.40 757.10,206.40 756.20,209.10"/><polygon fill="#fff" points="749.95,237.35 754.60,223.60 774.30,218.25 778.40,211.75 780.90,218.25 799.00,214.85 783.70,222.95 784.95,229.25 778.70,226.75 771.20,231.75"/><polygon fill="#9093a6" points="763.70,226.50 764.60,223.80 765.90,223.80 765.00,226.50"/><polygon fill="#9093a6" points="761.20,232.10 762.10,229.40 763.40,229.40 762.50,232.10"/><polygon fill="#fff" points="756.25,260.35 760.90,246.60 780.60,241.25 784.70,234.75 787.20,241.25 805.30,237.85 790.00,245.95 791.25,252.25 785.00,249.75 777.50,254.75"/><polygon fill="#9093a6" points="770.00,249.50 770.90,246.80 772.20,246.80 771.30,249.50"/><polygon fill="#9093a6" points="767.50,255.10 768.40,252.40 769.70,252.40 768.80,255.10"/><polygon fill="#fff" points="762.55,283.35 767.20,269.60 786.90,264.25 791.00,257.75 793.50,264.25 811.60,260.85 796.30,268.95 797.55,275.25 791.30,272.75 783.80,277.75"/><polygon fill="#9093a6" points="776.30,272.50 777.20,269.80 778.50,269.80 777.60,272.50"/><polygon fill="#9093a6" points="773.80,278.10 774.70,275.40 776.00,275.40 775.10,278.10"/><polygon fill="#fff" points="768.85,306.35 773.50,292.60 793.20,287.25 797.30,280.75 799.80,287.25 817.90,283.85 802.60,291.95 803.85,298.25 797.60,295.75 790.10,300.75"/><polygon fill="#9093a6" points="782.60,295.50 783.50,292.80 784.80,292.80 783.90,295.50"/><polygon fill="#9093a6" points="780.10,301.10 781.00,298.40 782.30,298.40 781.40,301.10"/><polygon fill="#fff" points="775.15,329.35 779.80,315.60 799.50,310.25 803.60,303.75 806.10,310.25 824.20,306.85 808.90,314.95 810.15,321.25 803.90,318.75 796.40,323.75"/><polygon fill="#9093a6" points="788.90,318.50 789.80,315.80 791.10,315.80 790.20,318.50"/><polygon fill="#9093a6" points="786.40,324.10 787.30,321.40 788.60,321.40 787.70,324.10"/><polygon fill="#fff" points="781.45,352.35 786.10,338.60 805.80,333.25 809.90,326.75 812.40,333.25 830.50,329.85 815.20,337.95 816.45,344.25 810.20,341.75 802.70,346.75"/><polygon fill="#9093a6" points="795.20,341.50 796.10,338.80 797.40,338.80 796.50,341.50"/><polygon fill="#9093a6" points="792.70,347.10 793.60,344.40 794.90,344.40 794.00,347.10"/><polygon fill="#fff" points="787.75,375.35 792.40,361.60 812.10,356.25 816.20,349.75 818.70,356.25 836.80,352.85 821.50,360.95 822.75,367.25 816.50,364.75 809.00,369.75"/><polygon fill="#9093a6" points="801.50,364.50 802.40,361.80 803.70,361.80 802.80,364.50"/><polygon fill="#9093a6" points="799.00,370.10 799.90,367.40 801.20,367.40 800.30,370.10"/>
<rect x="586.4" y="204.4" width="59" height="61.5" rx="14" ry="14" fill="#fff"/>
<polygon fill="#1d92e1" points="581.25,356.00 605.40,350.00 603.50,346.00 647.90,334.00 646.00,330.00 669.10,324.40 669.75,329.75 688.50,325.60 689.10,329.75 712.50,324.60 712.50,472.00 581.25,472.00"/>
<polygon fill="#000" points="581.25,346.00 595.40,342.50 592.25,336.90 613.50,331.25 609.75,326.50 673.50,311.00 674.10,315.60 694.10,311.25 694.75,318.75 712.50,314.00 712.50,324.60 689.10,329.75 688.50,325.60 669.75,329.75 669.10,324.40 646.00,330.00 647.90,334.00 603.50,346.00 605.40,350.00 581.25,356.00"/>
<polygon fill="#000" points="581.25,383.10 604.10,377.10 601.00,371.40 621.60,366.00 619.10,361.25 682.25,345.60 682.90,350.60 703.00,346.10 703.60,352.00 712.50,350.50 712.50,361.10 698.30,364.40 697.70,360.30 678.50,364.40 677.25,358.75 654.75,364.40 656.60,368.75 611.60,380.00 614.10,384.75 581.25,393.10"/>
<polygon fill="#000" points="581.25,413.00 584.10,412.40 583.50,419.00 612.90,411.90 609.75,406.60 630.40,401.00 627.25,396.25 691.00,380.60 691.60,385.00 712.50,380.40 712.50,393.50 687.90,399.00 686.60,394.40 663.50,399.75 665.20,403.75 620.50,414.90 622.90,419.60 581.25,430.00"/>
<polygon fill="#000" points="581.25,450.00 592.90,447.50 592.25,454.40 621.70,446.90 618.60,441.90 639.00,436.20 636.10,431.25 699.90,415.40 700.50,420.00 712.50,417.60 712.50,430.50 696.40,433.75 695.80,429.20 672.00,434.60 673.90,438.50 628.90,450.00 631.40,454.40 581.25,466.80"/>
<polygon fill="#000" points="646.70,471.50 644.20,465.80 708.75,450.00 709.40,455.00 712.50,454.30 712.50,472.00"/>
</g>
</svg><div class="abs" id="appbar"></div>
<div class="abs" id="tabbar"></div>
<div class="abs" id="toolbar"></div>
<div class="abs" id="tbhead"></div>
<div class="abs" id="status"></div>
<div class="abs" id="hscroll"></div>
<div class="abs" id="gutter"></div>
<div class="abs" id="bottomline"></div>
<!-- app bar contents -->
<div class="abs" style="left:7px;top:4px;width:9.8px;height:10.2px;background:#2e0a00;border-radius:2px"></div>
<div class="t" style="left:8.7px;top:5.2px;font-size:6.5px;line-height:8px;font-weight:bold;color:#ea7c4c;letter-spacing:-0.3px">Ai</div>
<svg class="abs" style="left:26.3px;top:5px" width="13" height="11" viewBox="0 0 14 12"><path d="M7 0.6 L0.9 6.2 H2.4 V11.4 H5.6 V7.8 H8.4 V11.4 H11.6 V6.2 H13.1 Z" fill="#dcdcdc"/></svg>
<div class="abs" style="left:48px;top:4px;width:1px;height:12px;background:#474747"></div><div class="abs" style="left:309.5px;top:3px;width:1px;height:13px;background:#5b5b5b"></div>
<div class="menu" style="left:58.5px;letter-spacing:-0.269px">File</div>
<div class="menu" style="left:80px;letter-spacing:0.014px">Edit</div>
<div class="menu" style="left:103px;letter-spacing:0.076px">Object</div>
<div class="menu" style="left:136px;letter-spacing:-0.229px">Type</div>
<div class="menu" style="left:162px;letter-spacing:-0.114px">Select</div>
<div class="menu" style="left:192px;letter-spacing:0.033px">Effect</div>
<div class="menu" style="left:222px;letter-spacing:-0.192px">View</div>
<div class="menu" style="left:247px;letter-spacing:0.208px">Window</div>
<div class="menu" style="left:285px;letter-spacing:0.237px">Help</div>
<svg class="abs" style="left:317.5px;top:5.5px" width="12" height="8" viewBox="0 0 12 8"><rect x="0.3" y="0.3" width="5" height="7" fill="#d6d6d6"/><rect x="6.3" y="0.3" width="5" height="3" fill="#d6d6d6"/><rect x="6.3" y="4.3" width="5" height="3" fill="#d6d6d6"/></svg>
<svg class="abs" style="left:334px;top:7.5px" width="6" height="4" viewBox="0 0 6 4"><path d="M0.8 0.7 L3 2.9 L5.2 0.7" fill="none" stroke="#d6d6d6" stroke-width="1.25"/></svg>
<svg class="abs" style="left:350.8px;top:4.8px" width="12.6" height="10.2" viewBox="0 0 12.6 10.2"><rect x="0.55" y="0.55" width="11.5" height="9" fill="none" stroke="#cfcfcf" stroke-width="1.1"/><path d="M4.4 2.6 V7 L5.6 8.4 V10.2 H10.2 V8.6 L10.8 5.6 L8.8 4.6 L7.6 4.6 V2.6 Z" fill="#d4d4d4"/><rect x="2.4" y="2" width="1.4" height="5.4" fill="#3f3f3f"/><rect x="8.6" y="2" width="1.6" height="2.2" fill="#3f3f3f"/></svg>
<div class="abs" style="left:784px;top:3px;width:1px;height:14px;background:#484848"></div><div class="abs" style="left:847px;top:3px;width:1px;height:14px;background:#484848"></div>
<div class="menu" style="left:792.5px;letter-spacing:-0.175px">Essentials</div>
<svg class="abs" style="left:833px;top:8px" width="6" height="4" viewBox="0 0 6 4"><path d="M0.8 0.7 L3 2.9 L5.2 0.7" fill="none" stroke="#d6d6d6" stroke-width="1.25"/></svg>
<div class="abs" style="left:853px;top:3.5px;width:109.5px;height:12px;background:#474747;border-radius:1px"></div>
<svg class="abs" style="left:854.6px;top:5.4px" width="13" height="8" viewBox="0 0 13 8"><circle cx="3" cy="3" r="2.3" fill="none" stroke="#cfcfcf" stroke-width="1.15"/><path d="M4.7 4.7 L7 7.2" stroke="#cfcfcf" stroke-width="1.3"/><path d="M8.4 2.8 L10.3 4.6 L12.2 2.8" fill="none" stroke="#cfcfcf" stroke-width="1.1"/></svg>
<div class="menu" style="left:868.7px;top:4.7px;color:#767676;font-size:6.9px">Search Adobe Stock</div>
<div class="abs" style="left:969.7px;top:0;width:54.3px;height:11.6px;background:#5a5a5a"></div><div class="abs" style="left:987.3px;top:0;width:0.8px;height:11.6px;background:#535353"></div><div class="abs" style="left:1005.3px;top:0;width:0.8px;height:11.6px;background:#535353"></div><div class="abs" style="left:975.3px;top:7.3px;width:7px;height:1.6px;background:#c8c8c8"></div>
<svg class="abs" style="left:991.8px;top:2.2px" width="10.2" height="8.2" viewBox="0 0 10.2 8.2"><path d="M3.8 2.6 V0.65 H9.5 V5.7 H6.6" fill="none" stroke="#c4c4c4" stroke-width="1.2"/><rect x="0.65" y="2.9" width="5.6" height="4.6" fill="none" stroke="#c4c4c4" stroke-width="1.25"/></svg>
<svg class="abs" style="left:1011.8px;top:3px" width="6.4" height="5.8" viewBox="0 0 6.4 5.8"><path d="M0.6 0.5 L5.8 5.3 M5.8 0.5 L0.6 5.3" stroke="#d0d0d0" stroke-width="1.3"/></svg>

<!-- tabs -->
<div class="abs" style="left:189px;top:20px;width:154px;height:19px;background:#535353"></div>
<div class="t" style="left:33.5px;top:25px;font-size:7.15px;line-height:10px;font-weight:bold;color:#a2a2a2;letter-spacing:-0.06px">CAPA IPHONE.ai @ 50% (RGB/Preview)</div>
<svg class="abs" style="left:178.5px;top:26.5px" width="6" height="6" viewBox="0 0 6 6"><path d="M0.7 0.7 L5.3 5.3 M5.3 0.7 L0.7 5.3" stroke="#a8a8a8" stroke-width="0.9"/></svg>
<div class="t" style="left:194.3px;top:25px;font-size:7.15px;line-height:10px;font-weight:bold;color:#f0f0f0;letter-spacing:-0.06px">IPHONE SE.ai @ 12,5% (RGB/Preview)</div>
<svg class="abs" style="left:333.5px;top:26.5px" width="6" height="6" viewBox="0 0 6 6"><path d="M0.7 0.7 L5.3 5.3 M5.3 0.7 L0.7 5.3" stroke="#dcdcdc" stroke-width="0.9"/></svg>

<!-- status bar -->
<div class="abs" style="left:27.6px;top:645.5px;width:988px;height:1px;background:#676767"></div>
<div class="abs" style="left:28px;top:647px;width:34px;height:9px;background:#464646"></div>
<div class="t" style="left:32px;top:647.5px;font-size:7px;line-height:9px;color:#e0e0e0">12,5%</div>
<svg class="abs" style="left:65.5px;top:650.5px" width="6" height="4" viewBox="0 0 6 4"><path d="M0.8 0.7 L3 2.9 L5.2 0.7" fill="none" stroke="#d6d6d6" stroke-width="1.25"/></svg>
<svg class="abs" style="left:80px;top:649px" width="18" height="7" viewBox="0 0 18 7"><path d="M1 0.5 V6.5" stroke="#6c6c6c" stroke-width="1.2"/><path d="M6 0.5 L2.4 3.5 L6 6.5 Z" fill="#6c6c6c"/><path d="M16 0.5 L12.6 3.5 L16 6.5 Z" fill="#6c6c6c"/></svg>
<div class="abs" style="left:100px;top:647px;width:28px;height:9px;background:#464646"></div>
<div class="t" style="left:103.5px;top:647.5px;font-size:7px;line-height:9px;color:#e0e0e0">1</div>
<svg class="abs" style="left:131px;top:650.5px" width="6" height="4" viewBox="0 0 6 4"><path d="M0.8 0.7 L3 2.9 L5.2 0.7" fill="none" stroke="#d6d6d6" stroke-width="1.25"/></svg>
<svg class="abs" style="left:146px;top:649px" width="18" height="7" viewBox="0 0 18 7"><path d="M1 0.5 L4.6 3.5 L1 6.5 Z" fill="#d6d6d6"/><path d="M11 0.5 L14.4 3.5 L11 6.5 Z" fill="#d6d6d6"/><path d="M15.6 0.5 V6.5" stroke="#d6d6d6" stroke-width="1.2"/></svg>
<div class="t" style="left:225.8px;top:647.8px;font-size:6.8px;line-height:9px;color:#d8d8d8">Hand</div>
<svg class="abs" style="left:303.5px;top:649px" width="6" height="7" viewBox="0 0 6 7"><path d="M1 0.3 L5 3.5 L1 6.7 Z" fill="#d6d6d6"/></svg>
<svg class="abs" style="left:314.5px;top:649px" width="4" height="7" viewBox="0 0 4 7"><path d="M3.2 0.6 L1 3.5 L3.2 6.4" fill="none" stroke="#8a8a8a" stroke-width="0.9"/></svg>
<div class="abs" style="left:714px;top:647.5px;width:19px;height:6.5px;background:#696969;border-radius:3.2px"></div>
<svg class="abs" style="left:1007px;top:648.5px" width="4" height="6" viewBox="0 0 4 6"><path d="M0.8 0.6 L3 3 L0.8 5.4" fill="none" stroke="#b0b0b0" stroke-width="0.9"/></svg>
<!-- right gutter -->
<svg class="abs" style="left:1017.5px;top:42.5px" width="6" height="4" viewBox="0 0 6 4"><path d="M0.6 3.2 L3 0.8 L5.4 3.2" fill="none" stroke="#b0b0b0" stroke-width="1"/></svg>
<div class="abs" style="left:1018.5px;top:336px;width:5.5px;height:16px;background:#5e5e5e;border-radius:1px"></div>
<svg class="abs" style="left:1017.5px;top:637.5px" width="6" height="4" viewBox="0 0 6 4"><path d="M0.6 0.8 L3 3.2 L5.4 0.8" fill="none" stroke="#b0b0b0" stroke-width="1"/></svg>
<svg class="abs" style="left:0;top:0" width="27" height="657" viewBox="0 0 27 657">
<path d="M4 22.3 L5.4 23.7 L4 25.1 M6.4 22.3 L7.8 23.7 L6.4 25.1" fill="none" stroke="#9a9a9a" stroke-width="0.8"/>
<rect x="6" y="30.5" width="13" height="1.6" fill="#484848"/>
<rect x="4" y="451" width="19" height="14" rx="1" fill="#383838"/>
<g transform="translate(13.3,49.50)"><path d="M-3.6 -5.6 L4 1.6 L-0.4 2 L-3.1 5 Z" fill="none" stroke="#d2d2d2" stroke-width="1.1" stroke-linejoin="miter"/></g>
<g transform="translate(13.3,65.18)"><path d="M-3.8 -5.4 L4.8 1.2 L0.2 1.8 L-3.2 5 Z" fill="#d2d2d2"/><path d="M8.2 4 L8.2 6.2 L6 6.2 Z" fill="#d2d2d2"/></g>
<g transform="translate(13.3,80.86)"><path d="M-5 5 L2 -2.6" stroke="#d2d2d2" stroke-width="1.5"/><path d="M3.2 -5.8 V-3.4 M2 -4.6 H4.4 M-1.8 -4.4 V-2.8 M-2.6 -3.6 H-1 M4.4 -1 V0.6 M3.6 -0.2 H5.2" stroke="#d2d2d2" stroke-width="0.9"/></g>
<g transform="translate(13.3,96.54)"><ellipse cx="-1.2" cy="-1.6" rx="4.2" ry="3.1" fill="none" stroke="#d2d2d2" stroke-width="1.1"/><path d="M-3.8 1 C-5 3 -3.5 4.8 -2.2 3.6" fill="none" stroke="#d2d2d2" stroke-width="1"/><path d="M0.2 -2.2 L6 2.2 L3 2.6 L1.2 5.2 Z" fill="#d2d2d2" stroke="#535353" stroke-width="0.5"/></g>
<g transform="translate(13.3,112.22)"><path d="M-5.2 5.2 L-3.6 -0.6 L0.4 -3.6 L3.8 -0.2 L0.8 3.8 Z" fill="#d2d2d2"/><path d="M1.4 -4.6 L4.8 -1.2 L6 -2.6 L2.8 -5.8 Z" fill="#d2d2d2"/><circle cx="-1.2" cy="1.2" r="0.9" fill="#535353"/><path d="M-5 5 L-1.6 1.6" stroke="#535353" stroke-width="0.6"/><path d="M8.2 4 L8.2 6.2 L6 6.2 Z" fill="#d2d2d2"/></g>
<g transform="translate(13.3,127.90)"><g transform="translate(1.4,0) scale(0.9)"><path d="M-5.2 5.2 L-3.6 -0.6 L0.4 -3.6 L3.8 -0.2 L0.8 3.8 Z" fill="#d2d2d2"/><path d="M1.4 -4.6 L4.8 -1.2 L6 -2.6 L2.8 -5.8 Z" fill="#d2d2d2"/><circle cx="-1.2" cy="1.2" r="0.9" fill="#535353"/><path d="M-5 5 L-1.6 1.6" stroke="#535353" stroke-width="0.6"/></g><path d="M-5.6 -4 C-3.8 -3 -6.8 0 -5.2 1.6 C-4.4 2.6 -5.8 4 -6 5.2" fill="none" stroke="#d2d2d2" stroke-width="0.9"/></g>
<g transform="translate(13.3,143.58)"><path d="M-4.6 -5.2 H4.6 V-2.6 H3.6 L3.2 -3.9 H1 V4 L2.6 4.4 V5.2 H-2.6 V4.4 L-1 4 V-3.9 H-3.2 L-3.6 -2.6 H-4.6 Z" fill="#d2d2d2"/><path d="M8.2 4 L8.2 6.2 L6 6.2 Z" fill="#d2d2d2"/></g>
<g transform="translate(13.3,159.26)"><path d="M-5 5.4 L4.2 -5" stroke="#d2d2d2" stroke-width="1.2"/><path d="M8.2 4 L8.2 6.2 L6 6.2 Z" fill="#d2d2d2"/></g>
<g transform="translate(13.3,174.94)"><rect x="-5.2" y="-4.6" width="10.4" height="9.2" fill="#7c7c7c" stroke="#d2d2d2" stroke-width="0.9"/><path d="M8.2 4 L8.2 6.2 L6 6.2 Z" fill="#d2d2d2"/></g>
<g transform="translate(13.3,190.62)"><path d="M5 -5.6 L-0.6 1.4" stroke="#d2d2d2" stroke-width="1.7" stroke-linecap="round"/><path d="M-1.6 1 L0.6 2.8 C-0.4 5 -3 5.6 -5.4 5 C-4 4 -4 1.6 -1.6 1 Z" fill="#d2d2d2"/><path d="M8.2 4 L8.2 6.2 L6 6.2 Z" fill="#d2d2d2"/></g>
<g transform="translate(13.3,206.30)"><circle cx="-2.6" cy="-1.2" r="3.1" fill="none" stroke="#d2d2d2" stroke-width="1.1"/><path d="M-1.2 5 L6 -5" stroke="#d2d2d2" stroke-width="1.7"/><path d="M8.2 4 L8.2 6.2 L6 6.2 Z" fill="#d2d2d2"/></g>
<g transform="translate(13.3,221.98)"><path d="M-5.4 1.6 L0.2 -5.2 L5.4 -1.2 L-0.2 5.4 Z" fill="#d2d2d2"/><path d="M-3.6 -0.4 L1.4 3.6" stroke="#535353" stroke-width="0.8"/><path d="M8.2 4 L8.2 6.2 L6 6.2 Z" fill="#d2d2d2"/></g>
<g transform="translate(13.3,237.66)"><path d="M-4.2 -1 A4.4 4.4 0 1 1 -1 4.2" fill="none" stroke="#d2d2d2" stroke-width="1.2"/><path d="M-1 4.2 A4.4 4.4 0 0 1 -4.3 0.4" fill="none" stroke="#8a8a8a" stroke-width="1.1"/><path d="M-6 -3.6 L-2.2 -3.2 L-4.6 0 Z" fill="#d2d2d2"/><path d="M8.2 4 L8.2 6.2 L6 6.2 Z" fill="#d2d2d2"/></g>
<g transform="translate(13.3,253.34)"><rect x="-5.4" y="-0.8" width="6.4" height="6.2" fill="none" stroke="#d2d2d2" stroke-width="1"/><rect x="-2" y="-5.2" width="7.6" height="7.4" fill="none" stroke="#d2d2d2" stroke-width="1"/><path d="M5 -4.6 L2 -1.6" stroke="#d2d2d2" stroke-width="0.8"/><path d="M8.2 4 L8.2 6.2 L6 6.2 Z" fill="#d2d2d2"/></g>
<g transform="translate(13.3,269.02)"><path d="M-5 4.6 C-3 3.6 -3 1.2 -1.4 1 C0.6 0.8 0.2 3.6 2 3.4 C4 3 3.6 -0.4 5.4 -1" fill="none" stroke="#d2d2d2" stroke-width="1.4"/><path d="M-3 -5 L1 -1.6 L-1 -1 L3.6 -3.4" fill="none" stroke="#d2d2d2" stroke-width="1.3"/><circle cx="-3.6" cy="-3.4" r="1.2" fill="#d2d2d2"/><path d="M8.2 4 L8.2 6.2 L6 6.2 Z" fill="#d2d2d2"/></g>
<g transform="translate(13.3,284.70)"><rect x="-2.6" y="-4.4" width="7.6" height="8.4" fill="none" stroke="#d2d2d2" stroke-width="0.8" stroke-dasharray="1 1"/><rect x="3.8" y="-5.4" width="2" height="2" fill="#d2d2d2"/><rect x="3.8" y="3.2" width="2" height="2" fill="#d2d2d2"/><rect x="-3.4" y="3.2" width="2" height="2" fill="#d2d2d2"/><path d="M-6 -5.4 L0.6 -0.6 L-2.8 0 L-5.4 2.8 Z" fill="#d2d2d2"/><path d="M8.2 4 L8.2 6.2 L6 6.2 Z" fill="#d2d2d2"/></g>
<g transform="translate(13.3,300.38)"><circle cx="-2.8" cy="-1" r="3" fill="none" stroke="#d2d2d2" stroke-width="0.9"/><circle cx="0.6" cy="-2" r="3" fill="none" stroke="#d2d2d2" stroke-width="0.9"/><path d="M-5.6 -0.6 H2.6" stroke="#d2d2d2" stroke-width="0.7"/><path d="M1 -0.6 L6.4 3.6 L3.4 4 L1.6 6.2 Z" fill="#d2d2d2"/><path d="M8.2 4 L8.2 6.2 L6 6.2 Z" fill="#d2d2d2"/></g>
<g transform="translate(13.3,316.06)"><path d="M-5.4 -5 L-5.4 4.6 L5.4 4.6 L-1.8 -5 Z" fill="none" stroke="#d2d2d2" stroke-width="0.9"/><path d="M-5.4 -1.6 L1 -1.6 M-5.4 1.6 L3.2 1.6 M-3.2 -5 L-2 4.6 M-1.8 -5 L1.6 4.6" stroke="#d2d2d2" stroke-width="0.7"/><path d="M8.2 4 L8.2 6.2 L6 6.2 Z" fill="#d2d2d2"/></g>
<g transform="translate(13.3,331.74)"><rect x="-5" y="-4.8" width="10" height="9.6" fill="none" stroke="#d2d2d2" stroke-width="1"/><path d="M-5 -1.6 C-2 -3.4 1.4 0.4 5 -1.8 M-5 2 C-2 0.4 1.4 3.6 5 1.6 M-1.8 -4.8 C-3.2 -1.6 0 1.6 -1.6 4.8 M1.8 -4.8 C0.4 -1.6 3.4 1.4 1.8 4.8" fill="none" stroke="#d2d2d2" stroke-width="0.8"/></g>
<g transform="translate(13.3,347.42)"><defs><linearGradient id="gg" x1="0" x2="1" y1="0" y2="0"><stop offset="0" stop-color="#5a5a5a"/><stop offset="1" stop-color="#d8d8d8"/></linearGradient></defs><rect x="-5" y="-4.8" width="10" height="9.6" fill="url(#gg)" stroke="#d2d2d2" stroke-width="0.8"/></g>
<g transform="translate(13.3,363.10)"><path d="M-5.2 5.2 L-4.4 2.6 L1.2 -3 L3 -1.2 L-2.6 4.4 Z" fill="none" stroke="#d2d2d2" stroke-width="0.9"/><path d="M0.6 -3.8 L3.8 -0.6 L5.6 -2.6 C6.4 -3.8 4.4 -6.2 2.8 -5.6 Z" fill="#d2d2d2"/><path d="M8.2 4 L8.2 6.2 L6 6.2 Z" fill="#d2d2d2"/></g>
<g transform="translate(13.3,378.78)"><rect x="-5.6" y="-5" width="4.4" height="4.6" fill="#d2d2d2"/><rect x="-2.8" y="-3" width="4.4" height="4.6" fill="#a8a8a8"/><circle cx="2.8" cy="2.2" r="3" fill="#535353" stroke="#d2d2d2" stroke-width="1"/></g>
<g transform="translate(13.3,394.46)"><rect x="-1.4" y="-2.4" width="6.4" height="7.8" rx="1.2" fill="none" stroke="#d2d2d2" stroke-width="1"/><rect x="0.2" y="-5.4" width="3.2" height="2.6" fill="#d2d2d2"/><circle cx="1.8" cy="1.6" r="1.7" fill="none" stroke="#d2d2d2" stroke-width="0.9"/><path d="M-5.6 -4.4 H-2.4 M-5.2 -4.4 V-0.6" stroke="#d2d2d2" stroke-width="1"/><path d="M8.2 4 L8.2 6.2 L6 6.2 Z" fill="#d2d2d2"/></g>
<g transform="translate(13.3,410.14)"><path d="M-5.2 -5.4 V5 H5.6" fill="none" stroke="#d2d2d2" stroke-width="1"/><rect x="-3.4" y="0.4" width="1.8" height="4" fill="#d2d2d2"/><rect x="-0.6" y="-3.8" width="1.8" height="8.2" fill="#d2d2d2"/><rect x="2.2" y="-1.8" width="1.8" height="6.2" fill="#d2d2d2"/><path d="M8.2 4 L8.2 6.2 L6 6.2 Z" fill="#d2d2d2"/></g>
<g transform="translate(13.3,425.82)"><path d="M-3 -6 V4 H6 M-6 -3 H2.4 L4 -1.4 V6" fill="none" stroke="#d2d2d2" stroke-width="1"/><path d="M-1.6 -1.4 H2 L2.6 -0.8 V2.6 H-1.6 Z" fill="#8a8a8a"/></g>
<g transform="translate(13.3,441.50)"><path d="M-5.4 5.2 L1 -4.2 L3.8 -5.6 L5.2 -3 L3.6 -0.6 Z" fill="none" stroke="#d2d2d2" stroke-width="1"/><path d="M1.4 -4 L4.6 -1.8 L5.2 -3 L3.8 -5.6 Z" fill="#d2d2d2"/><path d="M8.2 4 L8.2 6.2 L6 6.2 Z" fill="#d2d2d2"/></g>
<g transform="translate(13.3,457.18)"><path d="M-2.6 5.6 C-3.6 3.6 -5.6 1.6 -5.8 0.2 C-5.8 -0.8 -4.6 -0.8 -3.8 0.4 L-3.2 1.2 L-3.6 -3.8 C-3.6 -5 -2.2 -5 -2.1 -3.8 L-1.7 -0.8 L-1.5 -5 C-1.4 -6.2 0 -6.2 0 -5 L0.2 -0.8 L1 -4.4 C1.3 -5.6 2.6 -5.2 2.4 -4 L2 -0.2 L3.4 -2.8 C4 -3.8 5 -3.2 4.6 -2.2 C4 0 3.8 3.2 2.4 5.6 Z" fill="#d2d2d2"/><path d="M8.2 4 L8.2 6.2 L6 6.2 Z" fill="#d2d2d2"/></g>
<g transform="translate(13.3,472.86)"><circle cx="-1.4" cy="-1.6" r="3.6" fill="none" stroke="#d2d2d2" stroke-width="1.1"/><path d="M1.2 1 L5.4 5" stroke="#d2d2d2" stroke-width="1.7" stroke-linecap="round"/></g>
<rect x="5" y="486.5" width="4.6" height="4.6" fill="#fff" stroke="#222" stroke-width="0.6"/><rect x="7.4" y="489" width="4.4" height="4.4" fill="#111" stroke="#ddd" stroke-width="0.8"/>
<path d="M18.2 488.4 C21.4 488 22.4 490 22 492.6" fill="none" stroke="#cfcfcf" stroke-width="1.2"/><path d="M17 488.6 L19.6 486.4 L19.6 490.6 Z" fill="#cfcfcf"/><path d="M22 494.4 L20 491.8 L24 491.8 Z" fill="#cfcfcf"/>
<rect x="3.8" y="498.6" width="12.6" height="12.4" fill="#fff"/>
<rect x="10.4" y="505" width="12.2" height="11.8" fill="#000"/><rect x="12.9" y="507.5" width="7.2" height="6.8" fill="#5c5c5c" stroke="#8a8a8a" stroke-width="0.5"/>
<rect x="4.2" y="522.2" width="5.4" height="5.6" fill="#111"/><rect x="5.8" y="523.6" width="1.8" height="2.4" fill="#ddd"/>
<defs><linearGradient id="g2" x1="0" x2="1"><stop offset="0" stop-color="#fff"/><stop offset="1" stop-color="#777"/></linearGradient></defs><rect x="10.4" y="522.2" width="5" height="5.6" fill="url(#g2)"/>
<rect x="16.2" y="522.2" width="5.8" height="5.6" fill="#fff"/><path d="M16.4 527.6 L21.8 522.4" stroke="#e0202a" stroke-width="1.2"/>
<circle cx="11.6" cy="536.6" r="2.8" fill="none" stroke="#cfcfcf" stroke-width="0.9"/><rect x="11.6" y="536.6" width="5" height="4.6" rx="1" fill="#9a9a9a" stroke="#cfcfcf" stroke-width="0.8"/>
<rect x="10.6" y="549" width="8.8" height="6.8" fill="#7a7a7a" stroke="#cfcfcf" stroke-width="0.9"/><rect x="7.2" y="551.4" width="8.6" height="6.4" fill="#666" stroke="#cfcfcf" stroke-width="0.9"/>
<circle cx="10" cy="574.6" r="1" fill="#cfcfcf"/><circle cx="13.6" cy="574.6" r="1" fill="#cfcfcf"/><circle cx="17.2" cy="574.6" r="1" fill="#cfcfcf"/>
<rect x="0" y="583.5" width="26" height="1" fill="#464646"/>
<rect x="0" y="20" width="0.9" height="636" fill="#464646"/>
</svg>
<svg class="abs" style="left:0;top:0" width="1024" height="657" viewBox="0 0 1024 657" font-family="Liberation Sans, sans-serif">
<rect x="860" y="533" width="157" height="6.5" fill="#585858"/>
<rect x="860" y="533" width="158.5" height="1" fill="#3c3c3c"/>
<rect x="1017" y="20" width="1.6" height="514" fill="#414141"/>
<rect x="860" y="20" width="157" height="513" fill="#4f4f4f"/>
<rect x="860" y="20" width="1" height="513" fill="#3e3e3e"/>
<rect x="861" y="20" width="156" height="9.5" fill="#474747"/><rect x="861" y="29.2" width="156" height="0.8" fill="#3e3e3e"/>
<path d="M999.4 23 L997.9 24.6 L999.4 26.2 M1002 23 L1000.5 24.6 L1002 26.2" fill="none" stroke="#9c9c9c" stroke-width="0.8"/>
<path d="M1009.6 22.4 L1013.8 26.6 M1013.8 22.4 L1009.6 26.6" stroke="#d0d0d0" stroke-width="1.1"/>
<rect x="861" y="30" width="156" height="16.8" fill="#424242"/>
<rect x="894.8" y="30" width="29.4" height="17" fill="#4f4f4f"/>
<text x="866.7" y="40.4" font-size="6.9" fill="#a8a8a8" font-weight="bold" textLength="27.3" lengthAdjust="spacingAndGlyphs">Propertie</text>
<text x="900" y="40.4" font-size="6.9" fill="#f2f2f2" font-weight="bold" textLength="19.3" lengthAdjust="spacingAndGlyphs">Layers</text>
<text x="930.7" y="40.4" font-size="6.9" fill="#a8a8a8" font-weight="bold" textLength="27.4" lengthAdjust="spacingAndGlyphs">Artboard</text>
<text x="963.5" y="40.4" font-size="6.9" fill="#a8a8a8" font-weight="bold" textLength="25.8" lengthAdjust="spacingAndGlyphs">Libraries</text>
<rect x="893.6" y="31" width="1.4" height="14" fill="#424242"/>
<rect x="957.2" y="31" width="3.4" height="14" fill="#424242"/>
<path d="M1007.6 35.6 H1013.6 M1007.6 37.8 H1013.6 M1007.6 40 H1013.6" stroke="#747474" stroke-width="1.1"/>
<rect x="864" y="50.9" width="141.6" height="467.84" fill="#4e4e4e"/>
<rect x="864" y="50.9" width="141.6" height="13.36" fill="#4b668f"/>
<path d="M866.6 57.78 C868.6 54.78 873.2 54.78 875.2 57.78 C873.2 60.78 868.6 60.78 866.6 57.78 Z" fill="#dcdcdc"/><circle cx="870.9" cy="57.78" r="1.6" fill="#4e4e4e"/><circle cx="870.9" cy="57.78" r="0.8" fill="#dcdcdc"/>
<rect x="892.1" y="51.20" width="2.5" height="13.16" fill="#557fe0"/>
<circle cx="989" cy="57.78" r="2.7" fill="none" stroke="#d4d4d4" stroke-width="0.9"/>
<path d="M900.2 56.58 L902.6 58.98 L905 56.58" fill="none" stroke="#e6e6e6" stroke-width="1.1"/>
<rect x="912" y="52.30" width="11.6" height="11.4" fill="#161616"/><rect x="912" y="52.30" width="10.8" height="10.6" fill="#fff"/>
<rect x="915.2" y="55.98" width="2.2" height="2.6" fill="#2a8ad0"/><rect x="920.8" y="56.18" width="1.6" height="2.4" fill="#1f6fb0"/>
<text x="926.6" y="60.18" font-size="6.8" fill="#f0f0f0" font-weight="normal" >Layer 1</text>
<rect x="864" y="64.26" width="141.6" height="0.8" fill="#565656"/>
<path d="M866.6 71.54 C868.6 68.54 873.2 68.54 875.2 71.54 C873.2 74.54 868.6 74.54 866.6 71.54 Z" fill="#dcdcdc"/><circle cx="870.9" cy="71.54" r="1.6" fill="#4e4e4e"/><circle cx="870.9" cy="71.54" r="0.8" fill="#dcdcdc"/>
<rect x="892.1" y="64.96" width="2.5" height="13.16" fill="#557fe0"/>
<circle cx="989" cy="71.54" r="2.7" fill="none" stroke="#d4d4d4" stroke-width="0.9"/>
<path d="M915.6 69.34 L917.8 71.54 L915.6 73.74" fill="none" stroke="#e6e6e6" stroke-width="1.1"/>
<rect x="927.4" y="65.96" width="11.6" height="11.6" fill="#161616"/><rect x="927.4" y="65.96" width="10.8" height="10.8" fill="#fff"/>
<rect x="931.0" y="69.36" width="3.4" height="4" fill="#2a8ad8"/><rect x="931.6" y="68.16" width="0.9" height="1.4" fill="#6ab0e8"/><rect x="933.0" y="68.16" width="0.9" height="1.4" fill="#6ab0e8"/>
<text x="942.4" y="73.94" font-size="6.7" fill="#e2e2e2" font-weight="normal" >&lt;Cli...</text>
<rect x="864" y="78.02" width="141.6" height="0.8" fill="#565656"/>
<path d="M866.6 85.30 C868.6 82.30 873.2 82.30 875.2 85.30 C873.2 88.30 868.6 88.30 866.6 85.30 Z" fill="#dcdcdc"/><circle cx="870.9" cy="85.30" r="1.6" fill="#4e4e4e"/><circle cx="870.9" cy="85.30" r="0.8" fill="#dcdcdc"/>
<rect x="892.1" y="78.72" width="2.5" height="13.16" fill="#557fe0"/>
<circle cx="989" cy="85.30" r="2.7" fill="none" stroke="#d4d4d4" stroke-width="0.9"/>
<rect x="927.4" y="79.72" width="11.6" height="11.6" fill="#161616"/><rect x="927.4" y="79.72" width="10.8" height="10.8" fill="#fff"/>
<text x="942.4" y="87.70" font-size="6.7" fill="#e2e2e2" font-weight="normal" >&lt;Pa...</text>
<rect x="864" y="91.78" width="141.6" height="0.8" fill="#565656"/>
<path d="M866.6 99.06 C868.6 96.06 873.2 96.06 875.2 99.06 C873.2 102.06 868.6 102.06 866.6 99.06 Z" fill="#dcdcdc"/><circle cx="870.9" cy="99.06" r="1.6" fill="#4e4e4e"/><circle cx="870.9" cy="99.06" r="0.8" fill="#dcdcdc"/>
<rect x="892.1" y="92.48" width="2.5" height="13.16" fill="#557fe0"/>
<circle cx="989" cy="99.06" r="2.7" fill="none" stroke="#d4d4d4" stroke-width="0.9"/>
<rect x="927.4" y="93.48" width="11.6" height="11.6" fill="#161616"/><rect x="927.4" y="93.48" width="10.8" height="10.8" fill="#fff"/>
<text x="942.4" y="101.46" font-size="6.7" fill="#e2e2e2" font-weight="normal" >&lt;Pa...</text>
<rect x="864" y="105.54" width="141.6" height="0.8" fill="#565656"/>
<path d="M866.6 112.82 C868.6 109.82 873.2 109.82 875.2 112.82 C873.2 115.82 868.6 115.82 866.6 112.82 Z" fill="#dcdcdc"/><circle cx="870.9" cy="112.82" r="1.6" fill="#4e4e4e"/><circle cx="870.9" cy="112.82" r="0.8" fill="#dcdcdc"/>
<rect x="892.1" y="106.24" width="2.5" height="13.16" fill="#557fe0"/>
<circle cx="989" cy="112.82" r="2.7" fill="none" stroke="#d4d4d4" stroke-width="0.9"/>
<rect x="927.4" y="107.24" width="11.6" height="11.6" fill="#161616"/><rect x="927.4" y="107.24" width="10.8" height="10.8" fill="#fff"/>
<text x="942.4" y="115.22" font-size="6.7" fill="#e2e2e2" font-weight="normal" >&lt;C...</text>
<rect x="864" y="119.30" width="141.6" height="0.8" fill="#565656"/>
<path d="M866.6 126.58 C868.6 123.58 873.2 123.58 875.2 126.58 C873.2 129.58 868.6 129.58 866.6 126.58 Z" fill="#dcdcdc"/><circle cx="870.9" cy="126.58" r="1.6" fill="#4e4e4e"/><circle cx="870.9" cy="126.58" r="0.8" fill="#dcdcdc"/>
<rect x="892.1" y="120.00" width="2.5" height="13.16" fill="#557fe0"/>
<circle cx="989" cy="126.58" r="2.7" fill="none" stroke="#d4d4d4" stroke-width="0.9"/>
<rect x="927.4" y="121.00" width="11.6" height="11.6" fill="#161616"/><rect x="927.4" y="121.00" width="10.8" height="10.8" fill="#fff"/>
<text x="942.4" y="128.98" font-size="6.7" fill="#e2e2e2" font-weight="normal" >&lt;Pa...</text>
<rect x="864" y="133.06" width="141.6" height="0.8" fill="#565656"/>
<path d="M866.6 140.34 C868.6 137.34 873.2 137.34 875.2 140.34 C873.2 143.34 868.6 143.34 866.6 140.34 Z" fill="#dcdcdc"/><circle cx="870.9" cy="140.34" r="1.6" fill="#4e4e4e"/><circle cx="870.9" cy="140.34" r="0.8" fill="#dcdcdc"/>
<rect x="892.1" y="133.76" width="2.5" height="13.16" fill="#557fe0"/>
<circle cx="989" cy="140.34" r="2.7" fill="none" stroke="#d4d4d4" stroke-width="0.9"/>
<rect x="927.4" y="134.76" width="11.6" height="11.6" fill="#161616"/><rect x="927.4" y="134.76" width="10.8" height="10.8" fill="#fff"/>
<text x="942.4" y="142.74" font-size="6.7" fill="#e2e2e2" font-weight="normal" >&lt;C...</text>
<rect x="864" y="146.82" width="141.6" height="0.8" fill="#565656"/>
<path d="M866.6 154.10 C868.6 151.10 873.2 151.10 875.2 154.10 C873.2 157.10 868.6 157.10 866.6 154.10 Z" fill="#dcdcdc"/><circle cx="870.9" cy="154.10" r="1.6" fill="#4e4e4e"/><circle cx="870.9" cy="154.10" r="0.8" fill="#dcdcdc"/>
<rect x="892.1" y="147.52" width="2.5" height="13.16" fill="#557fe0"/>
<circle cx="989" cy="154.10" r="2.7" fill="none" stroke="#d4d4d4" stroke-width="0.9"/>
<rect x="927.4" y="148.52" width="11.6" height="11.6" fill="#161616"/><rect x="927.4" y="148.52" width="10.8" height="10.8" fill="#fff"/>
<text x="942.4" y="156.50" font-size="6.7" fill="#e2e2e2" font-weight="normal" >&lt;Pa...</text>
<rect x="864" y="160.58" width="141.6" height="0.8" fill="#565656"/>
<path d="M866.6 167.86 C868.6 164.86 873.2 164.86 875.2 167.86 C873.2 170.86 868.6 170.86 866.6 167.86 Z" fill="#dcdcdc"/><circle cx="870.9" cy="167.86" r="1.6" fill="#4e4e4e"/><circle cx="870.9" cy="167.86" r="0.8" fill="#dcdcdc"/>
<rect x="892.1" y="161.28" width="2.5" height="13.16" fill="#557fe0"/>
<circle cx="989" cy="167.86" r="2.7" fill="none" stroke="#d4d4d4" stroke-width="0.9"/>
<rect x="927.4" y="162.28" width="11.6" height="11.6" fill="#161616"/><rect x="927.4" y="162.28" width="10.8" height="10.8" fill="#fff"/>
<text x="942.4" y="170.26" font-size="6.7" fill="#e2e2e2" font-weight="normal" >&lt;C...</text>
<rect x="864" y="174.34" width="141.6" height="0.8" fill="#565656"/>
<path d="M866.6 181.62 C868.6 178.62 873.2 178.62 875.2 181.62 C873.2 184.62 868.6 184.62 866.6 181.62 Z" fill="#dcdcdc"/><circle cx="870.9" cy="181.62" r="1.6" fill="#4e4e4e"/><circle cx="870.9" cy="181.62" r="0.8" fill="#dcdcdc"/>
<rect x="892.1" y="175.04" width="2.5" height="13.16" fill="#557fe0"/>
<circle cx="989" cy="181.62" r="2.7" fill="none" stroke="#d4d4d4" stroke-width="0.9"/>
<rect x="927.4" y="176.04" width="11.6" height="11.6" fill="#161616"/><rect x="927.4" y="176.04" width="10.8" height="10.8" fill="#fff"/>
<text x="942.4" y="184.02" font-size="6.7" fill="#e2e2e2" font-weight="normal" >&lt;C...</text>
<rect x="864" y="188.10" width="141.6" height="0.8" fill="#565656"/>
<path d="M866.6 195.38 C868.6 192.38 873.2 192.38 875.2 195.38 C873.2 198.38 868.6 198.38 866.6 195.38 Z" fill="#dcdcdc"/><circle cx="870.9" cy="195.38" r="1.6" fill="#4e4e4e"/><circle cx="870.9" cy="195.38" r="0.8" fill="#dcdcdc"/>
<rect x="892.1" y="188.80" width="2.5" height="13.16" fill="#557fe0"/>
<circle cx="989" cy="195.38" r="2.7" fill="none" stroke="#d4d4d4" stroke-width="0.9"/>
<rect x="927.4" y="189.80" width="11.6" height="11.6" fill="#161616"/><rect x="927.4" y="189.80" width="10.8" height="10.8" fill="#fff"/>
<text x="942.4" y="197.78" font-size="6.7" fill="#e2e2e2" font-weight="normal" >&lt;C...</text>
<rect x="864" y="201.86" width="141.6" height="0.8" fill="#565656"/>
<path d="M866.6 209.14 C868.6 206.14 873.2 206.14 875.2 209.14 C873.2 212.14 868.6 212.14 866.6 209.14 Z" fill="#dcdcdc"/><circle cx="870.9" cy="209.14" r="1.6" fill="#4e4e4e"/><circle cx="870.9" cy="209.14" r="0.8" fill="#dcdcdc"/>
<rect x="892.1" y="202.56" width="2.5" height="13.16" fill="#557fe0"/>
<circle cx="989" cy="209.14" r="2.7" fill="none" stroke="#d4d4d4" stroke-width="0.9"/>
<rect x="927.4" y="203.56" width="11.6" height="11.6" fill="#161616"/><rect x="927.4" y="203.56" width="10.8" height="10.8" fill="#fff"/>
<text x="942.4" y="211.54" font-size="6.7" fill="#e2e2e2" font-weight="normal" >&lt;C...</text>
<rect x="864" y="215.62" width="141.6" height="0.8" fill="#565656"/>
<path d="M866.6 222.90 C868.6 219.90 873.2 219.90 875.2 222.90 C873.2 225.90 868.6 225.90 866.6 222.90 Z" fill="#dcdcdc"/><circle cx="870.9" cy="222.90" r="1.6" fill="#4e4e4e"/><circle cx="870.9" cy="222.90" r="0.8" fill="#dcdcdc"/>
<rect x="892.1" y="216.32" width="2.5" height="13.16" fill="#557fe0"/>
<circle cx="989" cy="222.90" r="2.7" fill="none" stroke="#d4d4d4" stroke-width="0.9"/>
<rect x="927.4" y="217.32" width="11.6" height="11.6" fill="#161616"/><rect x="927.4" y="217.32" width="10.8" height="10.8" fill="#fff"/>
<text x="942.4" y="225.30" font-size="6.7" fill="#e2e2e2" font-weight="normal" >&lt;C...</text>
<rect x="864" y="229.38" width="141.6" height="0.8" fill="#565656"/>
<path d="M866.6 236.66 C868.6 233.66 873.2 233.66 875.2 236.66 C873.2 239.66 868.6 239.66 866.6 236.66 Z" fill="#dcdcdc"/><circle cx="870.9" cy="236.66" r="1.6" fill="#4e4e4e"/><circle cx="870.9" cy="236.66" r="0.8" fill="#dcdcdc"/>
<rect x="892.1" y="230.08" width="2.5" height="13.16" fill="#557fe0"/>
<circle cx="989" cy="236.66" r="2.7" fill="none" stroke="#d4d4d4" stroke-width="0.9"/>
<rect x="927.4" y="231.08" width="11.6" height="11.6" fill="#161616"/><rect x="927.4" y="231.08" width="10.8" height="10.8" fill="#fff"/>
<text x="942.4" y="239.06" font-size="6.7" fill="#e2e2e2" font-weight="normal" >&lt;C...</text>
<rect x="864" y="243.14" width="141.6" height="0.8" fill="#565656"/>
<path d="M866.6 250.42 C868.6 247.42 873.2 247.42 875.2 250.42 C873.2 253.42 868.6 253.42 866.6 250.42 Z" fill="#dcdcdc"/><circle cx="870.9" cy="250.42" r="1.6" fill="#4e4e4e"/><circle cx="870.9" cy="250.42" r="0.8" fill="#dcdcdc"/>
<rect x="892.1" y="243.84" width="2.5" height="13.16" fill="#557fe0"/>
<circle cx="989" cy="250.42" r="2.7" fill="none" stroke="#d4d4d4" stroke-width="0.9"/>
<rect x="927.4" y="244.84" width="11.6" height="11.6" fill="#161616"/><rect x="927.4" y="244.84" width="10.8" height="10.8" fill="#fff"/>
<text x="942.4" y="252.82" font-size="6.7" fill="#e2e2e2" font-weight="normal" >&lt;Pa...</text>
<rect x="864" y="256.90" width="141.6" height="0.8" fill="#565656"/>
<path d="M866.6 264.18 C868.6 261.18 873.2 261.18 875.2 264.18 C873.2 267.18 868.6 267.18 866.6 264.18 Z" fill="#dcdcdc"/><circle cx="870.9" cy="264.18" r="1.6" fill="#4e4e4e"/><circle cx="870.9" cy="264.18" r="0.8" fill="#dcdcdc"/>
<rect x="892.1" y="257.60" width="2.5" height="13.16" fill="#557fe0"/>
<circle cx="989" cy="264.18" r="2.7" fill="none" stroke="#d4d4d4" stroke-width="0.9"/>
<rect x="927.4" y="258.60" width="11.6" height="11.6" fill="#161616"/><rect x="927.4" y="258.60" width="10.8" height="10.8" fill="#fff"/>
<path d="M928.4 262.20 C930.4 261.00 934.4 261.00 937.4 261.40" fill="none" stroke="#9fd0f0" stroke-width="0.9"/>
<text x="942.4" y="266.58" font-size="6.7" fill="#e2e2e2" font-weight="normal" >&lt;Pa...</text>
<rect x="864" y="270.66" width="141.6" height="0.8" fill="#565656"/>
<path d="M866.6 277.94 C868.6 274.94 873.2 274.94 875.2 277.94 C873.2 280.94 868.6 280.94 866.6 277.94 Z" fill="#dcdcdc"/><circle cx="870.9" cy="277.94" r="1.6" fill="#4e4e4e"/><circle cx="870.9" cy="277.94" r="0.8" fill="#dcdcdc"/>
<rect x="892.1" y="271.36" width="2.5" height="13.16" fill="#557fe0"/>
<circle cx="989" cy="277.94" r="2.7" fill="none" stroke="#d4d4d4" stroke-width="0.9"/>
<rect x="927.4" y="272.36" width="11.6" height="11.6" fill="#161616"/><rect x="927.4" y="272.36" width="10.8" height="10.8" fill="#fff"/>
<path d="M931.0 273.96 L937.4 273.36 L935.4 281.76 L928.8 282.16 Z" fill="#9fd0f0"/>
<text x="942.4" y="280.34" font-size="6.7" fill="#e2e2e2" font-weight="normal" >&lt;Pa...</text>
<rect x="864" y="284.42" width="141.6" height="0.8" fill="#565656"/>
<path d="M866.6 291.70 C868.6 288.70 873.2 288.70 875.2 291.70 C873.2 294.70 868.6 294.70 866.6 291.70 Z" fill="#dcdcdc"/><circle cx="870.9" cy="291.70" r="1.6" fill="#4e4e4e"/><circle cx="870.9" cy="291.70" r="0.8" fill="#dcdcdc"/>
<rect x="892.1" y="285.12" width="2.5" height="13.16" fill="#557fe0"/>
<circle cx="989" cy="291.70" r="2.7" fill="none" stroke="#d4d4d4" stroke-width="0.9"/>
<rect x="927.4" y="286.12" width="11.6" height="11.6" fill="#161616"/><rect x="927.4" y="286.12" width="10.8" height="10.8" fill="#fff"/>
<path d="M928.4 291.92 L937.4 291.12" stroke="#9fd0f0" stroke-width="0.9"/>
<text x="942.4" y="294.10" font-size="6.7" fill="#e2e2e2" font-weight="normal" >&lt;Pa...</text>
<rect x="864" y="298.18" width="141.6" height="0.8" fill="#565656"/>
<path d="M866.6 305.46 C868.6 302.46 873.2 302.46 875.2 305.46 C873.2 308.46 868.6 308.46 866.6 305.46 Z" fill="#dcdcdc"/><circle cx="870.9" cy="305.46" r="1.6" fill="#4e4e4e"/><circle cx="870.9" cy="305.46" r="0.8" fill="#dcdcdc"/>
<rect x="892.1" y="298.88" width="2.5" height="13.16" fill="#557fe0"/>
<circle cx="989" cy="305.46" r="2.7" fill="none" stroke="#d4d4d4" stroke-width="0.9"/>
<rect x="927.4" y="299.88" width="11.6" height="11.6" fill="#161616"/><rect x="927.4" y="299.88" width="10.8" height="10.8" fill="#fff"/>
<path d="M931.0 301.48 L937.4 300.88 L935.4 309.28 L928.8 309.68 Z" fill="#9fd0f0"/>
<text x="942.4" y="307.86" font-size="6.7" fill="#e2e2e2" font-weight="normal" >&lt;Pa...</text>
<rect x="864" y="311.94" width="141.6" height="0.8" fill="#565656"/>
<path d="M866.6 319.22 C868.6 316.22 873.2 316.22 875.2 319.22 C873.2 322.22 868.6 322.22 866.6 319.22 Z" fill="#dcdcdc"/><circle cx="870.9" cy="319.22" r="1.6" fill="#4e4e4e"/><circle cx="870.9" cy="319.22" r="0.8" fill="#dcdcdc"/>
<rect x="892.1" y="312.64" width="2.5" height="13.16" fill="#557fe0"/>
<circle cx="989" cy="319.22" r="2.7" fill="none" stroke="#d4d4d4" stroke-width="0.9"/>
<rect x="927.4" y="313.64" width="11.6" height="11.6" fill="#161616"/><rect x="927.4" y="313.64" width="10.8" height="10.8" fill="#fff"/>
<path d="M931.6 315.04 L933.8 314.84 L932.0 323.24 L930.4 323.24 Z" fill="#9fd0f0"/>
<text x="942.4" y="321.62" font-size="6.7" fill="#e2e2e2" font-weight="normal" >&lt;Pa...</text>
<rect x="864" y="325.70" width="141.6" height="0.8" fill="#565656"/>
<path d="M866.6 332.98 C868.6 329.98 873.2 329.98 875.2 332.98 C873.2 335.98 868.6 335.98 866.6 332.98 Z" fill="#dcdcdc"/><circle cx="870.9" cy="332.98" r="1.6" fill="#4e4e4e"/><circle cx="870.9" cy="332.98" r="0.8" fill="#dcdcdc"/>
<rect x="892.1" y="326.40" width="2.5" height="13.16" fill="#557fe0"/>
<circle cx="989" cy="332.98" r="2.7" fill="none" stroke="#d4d4d4" stroke-width="0.9"/>
<rect x="927.4" y="327.40" width="11.6" height="11.6" fill="#161616"/><rect x="927.4" y="327.40" width="10.8" height="10.8" fill="#fff"/>
<path d="M928.4 333.20 L937.4 332.40" stroke="#9fd0f0" stroke-width="0.9"/>
<text x="942.4" y="335.38" font-size="6.7" fill="#e2e2e2" font-weight="normal" >&lt;Pa...</text>
<rect x="864" y="339.46" width="141.6" height="0.8" fill="#565656"/>
<path d="M866.6 346.74 C868.6 343.74 873.2 343.74 875.2 346.74 C873.2 349.74 868.6 349.74 866.6 346.74 Z" fill="#dcdcdc"/><circle cx="870.9" cy="346.74" r="1.6" fill="#4e4e4e"/><circle cx="870.9" cy="346.74" r="0.8" fill="#dcdcdc"/>
<rect x="892.1" y="340.16" width="2.5" height="13.16" fill="#557fe0"/>
<circle cx="989" cy="346.74" r="2.7" fill="none" stroke="#d4d4d4" stroke-width="0.9"/>
<rect x="927.4" y="341.16" width="11.6" height="11.6" fill="#161616"/><rect x="927.4" y="341.16" width="10.8" height="10.8" fill="#fff"/>
<path d="M931.0 342.76 L937.4 342.16 L935.4 350.56 L928.8 350.96 Z" fill="#9fd0f0"/>
<text x="942.4" y="349.14" font-size="6.7" fill="#e2e2e2" font-weight="normal" >&lt;Pa...</text>
<rect x="864" y="353.22" width="141.6" height="0.8" fill="#565656"/>
<path d="M866.6 360.50 C868.6 357.50 873.2 357.50 875.2 360.50 C873.2 363.50 868.6 363.50 866.6 360.50 Z" fill="#dcdcdc"/><circle cx="870.9" cy="360.50" r="1.6" fill="#4e4e4e"/><circle cx="870.9" cy="360.50" r="0.8" fill="#dcdcdc"/>
<rect x="892.1" y="353.92" width="2.5" height="13.16" fill="#557fe0"/>
<circle cx="989" cy="360.50" r="2.7" fill="none" stroke="#d4d4d4" stroke-width="0.9"/>
<rect x="927.4" y="354.92" width="11.6" height="11.6" fill="#161616"/><rect x="927.4" y="354.92" width="10.8" height="10.8" fill="#fff"/>
<path d="M928.6 364.52 L937.4 359.32 L937.4 364.52 Z" fill="#9fd0f0"/>
<text x="942.4" y="362.90" font-size="6.7" fill="#e2e2e2" font-weight="normal" >&lt;Pa...</text>
<rect x="864" y="366.98" width="141.6" height="0.8" fill="#565656"/>
<path d="M866.6 374.26 C868.6 371.26 873.2 371.26 875.2 374.26 C873.2 377.26 868.6 377.26 866.6 374.26 Z" fill="#dcdcdc"/><circle cx="870.9" cy="374.26" r="1.6" fill="#4e4e4e"/><circle cx="870.9" cy="374.26" r="0.8" fill="#dcdcdc"/>
<rect x="892.1" y="367.68" width="2.5" height="13.16" fill="#557fe0"/>
<circle cx="989" cy="374.26" r="2.7" fill="none" stroke="#d4d4d4" stroke-width="0.9"/>
<rect x="927.4" y="368.68" width="11.6" height="11.6" fill="#161616"/><rect x="927.4" y="368.68" width="10.8" height="10.8" fill="#fff"/>
<path d="M928.6 378.28 L937.4 373.08 L937.4 378.28 Z" fill="#9fd0f0"/>
<text x="942.4" y="376.66" font-size="6.7" fill="#e2e2e2" font-weight="normal" >&lt;Pa...</text>
<rect x="864" y="380.74" width="141.6" height="0.8" fill="#565656"/>
<path d="M866.6 388.02 C868.6 385.02 873.2 385.02 875.2 388.02 C873.2 391.02 868.6 391.02 866.6 388.02 Z" fill="#dcdcdc"/><circle cx="870.9" cy="388.02" r="1.6" fill="#4e4e4e"/><circle cx="870.9" cy="388.02" r="0.8" fill="#dcdcdc"/>
<rect x="892.1" y="381.44" width="2.5" height="13.16" fill="#557fe0"/>
<circle cx="989" cy="388.02" r="2.7" fill="none" stroke="#d4d4d4" stroke-width="0.9"/>
<rect x="927.4" y="382.44" width="11.6" height="11.6" fill="#161616"/><rect x="927.4" y="382.44" width="10.8" height="10.8" fill="#fff"/>
<path d="M931.0 384.04 L937.4 383.44 L935.4 391.84 L928.8 392.24 Z" fill="#9fd0f0"/>
<text x="942.4" y="390.42" font-size="6.7" fill="#e2e2e2" font-weight="normal" >&lt;Pa...</text>
<rect x="864" y="394.50" width="141.6" height="0.8" fill="#565656"/>
<path d="M866.6 401.78 C868.6 398.78 873.2 398.78 875.2 401.78 C873.2 404.78 868.6 404.78 866.6 401.78 Z" fill="#dcdcdc"/><circle cx="870.9" cy="401.78" r="1.6" fill="#4e4e4e"/><circle cx="870.9" cy="401.78" r="0.8" fill="#dcdcdc"/>
<rect x="892.1" y="395.20" width="2.5" height="13.16" fill="#557fe0"/>
<circle cx="989" cy="401.78" r="2.7" fill="none" stroke="#d4d4d4" stroke-width="0.9"/>
<rect x="927.4" y="396.20" width="11.6" height="11.6" fill="#161616"/><rect x="927.4" y="396.20" width="10.8" height="10.8" fill="#fff"/>
<path d="M928.6 405.80 L937.4 400.60 L937.4 405.80 Z" fill="#9fd0f0"/>
<text x="942.4" y="404.18" font-size="6.7" fill="#e2e2e2" font-weight="normal" >&lt;Pa...</text>
<rect x="864" y="408.26" width="141.6" height="0.8" fill="#565656"/>
<path d="M866.6 415.54 C868.6 412.54 873.2 412.54 875.2 415.54 C873.2 418.54 868.6 418.54 866.6 415.54 Z" fill="#dcdcdc"/><circle cx="870.9" cy="415.54" r="1.6" fill="#4e4e4e"/><circle cx="870.9" cy="415.54" r="0.8" fill="#dcdcdc"/>
<rect x="892.1" y="408.96" width="2.5" height="13.16" fill="#557fe0"/>
<circle cx="989" cy="415.54" r="2.7" fill="none" stroke="#d4d4d4" stroke-width="0.9"/>
<rect x="927.4" y="409.96" width="11.6" height="11.6" fill="#161616"/><rect x="927.4" y="409.96" width="10.8" height="10.8" fill="#fff"/>
<path d="M931.0 411.56 L937.4 410.96 L935.4 419.36 L928.8 419.76 Z" fill="#9fd0f0"/>
<text x="942.4" y="417.94" font-size="6.7" fill="#e2e2e2" font-weight="normal" >&lt;Pa...</text>
<rect x="864" y="422.02" width="141.6" height="0.8" fill="#565656"/>
<path d="M866.6 429.30 C868.6 426.30 873.2 426.30 875.2 429.30 C873.2 432.30 868.6 432.30 866.6 429.30 Z" fill="#dcdcdc"/><circle cx="870.9" cy="429.30" r="1.6" fill="#4e4e4e"/><circle cx="870.9" cy="429.30" r="0.8" fill="#dcdcdc"/>
<rect x="892.1" y="422.72" width="2.5" height="13.16" fill="#557fe0"/>
<circle cx="989" cy="429.30" r="2.7" fill="none" stroke="#d4d4d4" stroke-width="0.9"/>
<rect x="927.4" y="423.72" width="11.6" height="11.6" fill="#161616"/><rect x="927.4" y="423.72" width="10.8" height="10.8" fill="#fff"/>
<path d="M931.0 425.32 L937.4 424.72 L935.4 433.12 L928.8 433.52 Z" fill="#9fd0f0"/>
<text x="942.4" y="431.70" font-size="6.7" fill="#e2e2e2" font-weight="normal" >&lt;Pa...</text>
<rect x="864" y="435.78" width="141.6" height="0.8" fill="#565656"/>
<path d="M866.6 443.06 C868.6 440.06 873.2 440.06 875.2 443.06 C873.2 446.06 868.6 446.06 866.6 443.06 Z" fill="#dcdcdc"/><circle cx="870.9" cy="443.06" r="1.6" fill="#4e4e4e"/><circle cx="870.9" cy="443.06" r="0.8" fill="#dcdcdc"/>
<rect x="892.1" y="436.48" width="2.5" height="13.16" fill="#557fe0"/>
<circle cx="989" cy="443.06" r="2.7" fill="none" stroke="#d4d4d4" stroke-width="0.9"/>
<rect x="927.4" y="437.48" width="11.6" height="11.6" fill="#161616"/><rect x="927.4" y="437.48" width="10.8" height="10.8" fill="#fff"/>
<path d="M928.6 447.08 L937.4 441.88 L937.4 447.08 Z" fill="#9fd0f0"/>
<text x="942.4" y="445.46" font-size="6.7" fill="#e2e2e2" font-weight="normal" >&lt;Pa...</text>
<rect x="864" y="449.54" width="141.6" height="0.8" fill="#565656"/>
<path d="M866.6 456.82 C868.6 453.82 873.2 453.82 875.2 456.82 C873.2 459.82 868.6 459.82 866.6 456.82 Z" fill="#dcdcdc"/><circle cx="870.9" cy="456.82" r="1.6" fill="#4e4e4e"/><circle cx="870.9" cy="456.82" r="0.8" fill="#dcdcdc"/>
<rect x="892.1" y="450.24" width="2.5" height="13.16" fill="#557fe0"/>
<circle cx="989" cy="456.82" r="2.7" fill="none" stroke="#d4d4d4" stroke-width="0.9"/>
<rect x="927.4" y="451.24" width="11.6" height="11.6" fill="#161616"/><rect x="927.4" y="451.24" width="10.8" height="10.8" fill="#fff"/>
<path d="M931.0 452.84 L937.4 452.24 L935.4 460.64 L928.8 461.04 Z" fill="#9fd0f0"/>
<text x="942.4" y="459.22" font-size="6.7" fill="#e2e2e2" font-weight="normal" >&lt;Pa...</text>
<rect x="864" y="463.30" width="141.6" height="0.8" fill="#565656"/>
<path d="M866.6 470.58 C868.6 467.58 873.2 467.58 875.2 470.58 C873.2 473.58 868.6 473.58 866.6 470.58 Z" fill="#dcdcdc"/><circle cx="870.9" cy="470.58" r="1.6" fill="#4e4e4e"/><circle cx="870.9" cy="470.58" r="0.8" fill="#dcdcdc"/>
<rect x="892.1" y="464.00" width="2.5" height="13.16" fill="#557fe0"/>
<circle cx="989" cy="470.58" r="2.7" fill="none" stroke="#d4d4d4" stroke-width="0.9"/>
<rect x="927.4" y="465.00" width="11.6" height="11.6" fill="#161616"/><rect x="927.4" y="465.00" width="10.8" height="10.8" fill="#fff"/>
<path d="M931.0 466.60 L937.4 466.00 L935.4 474.40 L928.8 474.80 Z" fill="#9fd0f0"/>
<text x="942.4" y="472.98" font-size="6.7" fill="#e2e2e2" font-weight="normal" >&lt;Pa...</text>
<rect x="864" y="477.06" width="141.6" height="0.8" fill="#565656"/>
<path d="M866.6 484.34 C868.6 481.34 873.2 481.34 875.2 484.34 C873.2 487.34 868.6 487.34 866.6 484.34 Z" fill="#dcdcdc"/><circle cx="870.9" cy="484.34" r="1.6" fill="#4e4e4e"/><circle cx="870.9" cy="484.34" r="0.8" fill="#dcdcdc"/>
<rect x="892.1" y="477.76" width="2.5" height="13.16" fill="#557fe0"/>
<circle cx="989" cy="484.34" r="2.7" fill="none" stroke="#d4d4d4" stroke-width="0.9"/>
<rect x="927.4" y="478.76" width="11.6" height="11.6" fill="#161616"/><rect x="927.4" y="478.76" width="10.8" height="10.8" fill="#fff"/>
<path d="M931.0 480.36 L937.4 479.76 L935.4 488.16 L928.8 488.56 Z" fill="#9fd0f0"/>
<text x="942.4" y="486.74" font-size="6.7" fill="#e2e2e2" font-weight="normal" >&lt;Pa...</text>
<rect x="864" y="490.82" width="141.6" height="0.8" fill="#565656"/>
<path d="M866.6 498.10 C868.6 495.10 873.2 495.10 875.2 498.10 C873.2 501.10 868.6 501.10 866.6 498.10 Z" fill="#dcdcdc"/><circle cx="870.9" cy="498.10" r="1.6" fill="#4e4e4e"/><circle cx="870.9" cy="498.10" r="0.8" fill="#dcdcdc"/>
<rect x="892.1" y="491.52" width="2.5" height="13.16" fill="#557fe0"/>
<circle cx="989" cy="498.10" r="2.7" fill="none" stroke="#d4d4d4" stroke-width="0.9"/>
<rect x="927.4" y="492.52" width="11.6" height="11.6" fill="#161616"/><rect x="927.4" y="492.52" width="10.8" height="10.8" fill="#fff"/>
<path d="M931.0 494.12 L937.4 493.52 L935.4 501.92 L928.8 502.32 Z" fill="#9fd0f0"/>
<text x="942.4" y="500.50" font-size="6.7" fill="#e2e2e2" font-weight="normal" >&lt;Pa...</text>
<rect x="864" y="504.58" width="141.6" height="0.8" fill="#565656"/>
<path d="M866.6 511.86 C868.6 508.86 873.2 508.86 875.2 511.86 C873.2 514.86 868.6 514.86 866.6 511.86 Z" fill="#dcdcdc"/><circle cx="870.9" cy="511.86" r="1.6" fill="#4e4e4e"/><circle cx="870.9" cy="511.86" r="0.8" fill="#dcdcdc"/>
<rect x="892.1" y="505.28" width="2.5" height="13.16" fill="#557fe0"/>
<circle cx="989" cy="511.86" r="2.7" fill="none" stroke="#d4d4d4" stroke-width="0.9"/>
<rect x="927.4" y="506.28" width="11.6" height="11.6" fill="#161616"/><rect x="927.4" y="506.28" width="10.8" height="10.8" fill="#fff"/>
<path d="M928.6 515.88 L937.4 510.68 L937.4 515.88 Z" fill="#9fd0f0"/>
<text x="942.4" y="514.26" font-size="6.7" fill="#e2e2e2" font-weight="normal" >&lt;Pa...</text>
<path d="M1000.6 51.3 H1005.4 V56.1 Z" fill="#e8e8e8"/>
<rect x="878.6" y="64.66" width="0.7" height="454.08" fill="#484848"/>
<rect x="983.2" y="64.66" width="0.7" height="454.08" fill="#484848"/>
<rect x="1006.4" y="62" width="6.2" height="220" fill="#5d5d5d"/>
<path d="M1007.4 56.6 L1009.6 54.4 L1011.8 56.6" fill="none" stroke="#b4b4b4" stroke-width="1"/>
<path d="M1007.4 512 L1009.6 514.2 L1011.8 512" fill="none" stroke="#b4b4b4" stroke-width="1"/>
<text x="864.3" y="528.9" font-size="6.5" fill="#dcdcdc" font-weight="normal" >1 Layer</text>
<path d="M910.4 523.4 H906.6 V530.2 H913.4 V527" fill="none" stroke="#d0d0d0" stroke-width="1"/><path d="M909.6 527.2 L914 522.8 M911 522.6 H914.2 V525.8" fill="none" stroke="#d0d0d0" stroke-width="1"/>
<circle cx="926.6" cy="525.4" r="2.2" fill="none" stroke="#6a6a6a" stroke-width="1"/><path d="M928.2 527 L930.8 529.8" stroke="#6a6a6a" stroke-width="1.1"/>
<rect x="941" y="522.8" width="6" height="6.4" fill="#5c5c5c"/>
<rect x="959.4" y="523.4" width="6.6" height="6.6" fill="none" stroke="#d0d0d0" stroke-width="1"/><path d="M961 526.7 H964.4 M962.7 525 V528.4" stroke="#d0d0d0" stroke-width="0.9"/><path d="M956.2 522.6 V526.6 H958.6 M957.4 525.4 L958.8 526.6 L957.4 527.8" fill="none" stroke="#d0d0d0" stroke-width="0.9"/>
<rect x="975.4" y="522.8" width="7.6" height="7.6" fill="none" stroke="#d0d0d0" stroke-width="1"/><path d="M977.2 526.6 H981.2 M979.2 524.6 V528.6" stroke="#d0d0d0" stroke-width="1"/>
<path d="M993 524.4 H999 M994.8 524.4 V523.2 H997.2 V524.4 M993.8 525 L994.2 530.2 H997.8 L998.2 525" fill="none" stroke="#6a6a6a" stroke-width="0.9"/>
</svg>
</div>
</body></html>
